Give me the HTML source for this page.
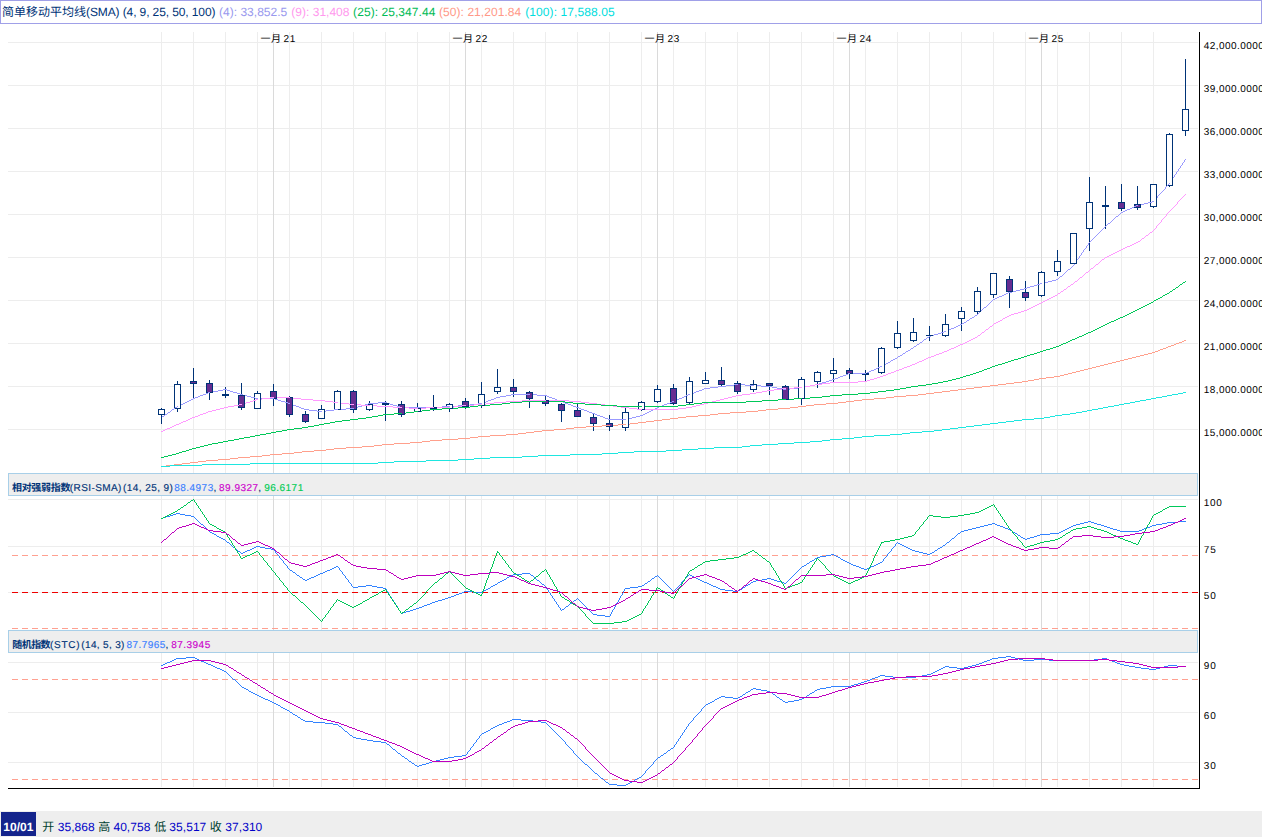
<!DOCTYPE html>
<html lang="zh-CN"><head><meta charset="utf-8"><title>SMA / RSI / STC</title>
<style>html,body{margin:0;padding:0;background:#fff;}body{width:1262px;height:837px;position:relative;overflow:hidden;}</style></head>
<body>
<svg width="1262" height="837" viewBox="0 0 1262 837" style="position:absolute;left:0;top:0">
<g shape-rendering="crispEdges" fill="none" stroke-width="1">
<path d="M161.5 32V787M193.5 32V787M225.5 32V787M257.5 32V787M289.5 32V787M321.5 32V787M353.5 32V787M385.5 32V787M417.5 32V787M449.5 32V787M481.5 32V787M513.5 32V787M545.5 32V787M577.5 32V787M609.5 32V787M641.5 32V787M673.5 32V787M705.5 32V787M737.5 32V787M769.5 32V787M801.5 32V787M833.5 32V787M865.5 32V787M897.5 32V787M929.5 32V787M961.5 32V787M993.5 32V787M1025.5 32V787M1057.5 32V787M1089.5 32V787M1121.5 32V787M1153.5 32V787" stroke="#ededed"/>
<path d="M8 42.5H1198M8 85.5H1198M8 128.5H1198M8 171.5H1198M8 214.5H1198M8 257.5H1198M8 300.5H1198M8 343.5H1198M8 386.5H1198M8 429.5H1198M8 499.5H1198M8 546.5H1198M8 592.5H1198M8 662.5H1198M8 712.5H1198M8 762.5H1198" stroke="#ededed"/>
<path d="M273.5 32V787M465.5 32V787M657.5 32V787M849.5 32V787M1041.5 32V787" stroke="#dadada"/>
</g>
<g shape-rendering="crispEdges" fill="none" stroke-linecap="butt" stroke-width="1">
<path d="M1185.5 59V136" stroke="#003377" stroke-width="1"/><rect x="1182.5" y="109.5" width="6" height="21" fill="#ffffff" stroke="#003377" stroke-width="1"/>
<path d="M1183.5 162v1M1182.5 163v2M1184.5 160v2M1174.5 175v2M1181.5 165v1M1178.5 169v2M1180.5 166v2M1185.5 159v1M1170.5 181v2M1172.5 178v2M1171.5 180v1M1176.5 172v2M1169.5 183v1M1173.5 177v1M1175.5 174v1M1177.5 171v1M1179.5 168v1" stroke="#9999ff"/>
<path d="M1170.5 210v1M1176.5 204v1M1179.5 200v1M1169.5 211v1M1177.5 202v2M1172.5 208v1M1180.5 199v1M1175.5 205v1M1171.5 209v1M1181.5 198v1M1183.5 196v1M1178.5 201v1M1184.5 195v1M1174.5 206v1M1182.5 197v1M1173.5 207v1M1185.5 194v1" stroke="#ff99ff"/>
<path d="M1176 287.5h2M1173 289.5h2M1183 282.5h2M1180 284.5h2M1170 291.5h2M1172.5 290v1M1169.5 292v1M1182.5 283v1M1178.5 286v1M1179.5 285v1M1175.5 288v1M1185.5 281v1" stroke="#00c858"/>
<path d="M1179 342.5h3M1171 345.5h3M1169 346.5h2M1176 343.5h3M1184 340.5h2M1174 344.5h2M1182 341.5h2" stroke="#ffa08c"/>
<path d="M1178 393.5h5M1183 392.5h3M1172 394.5h6M1169 395.5h3" stroke="#1ee6e0"/>
<path d="M1169.5 133V187" stroke="#003377" stroke-width="1"/><rect x="1166.5" y="134.5" width="6" height="51" fill="#ffffff" stroke="#003377" stroke-width="1"/>
<path d="M1163.5 190v1M1153.5 201v1M1162.5 191v1M1165.5 187v2M1161.5 192v1M1157.5 196v2M1159.5 194v1M1160.5 193v1M1156.5 198v1M1158.5 195v1M1168.5 184v1M1169.5 183v1M1154.5 200v1M1155.5 199v1M1164.5 189v1M1166.5 186v1M1167.5 185v1" stroke="#9999ff"/>
<path d="M1159.5 223v1M1162.5 219v1M1156.5 226v2M1158.5 224v1M1161.5 220v2M1154.5 229v1M1155.5 228v1M1157.5 225v1M1166.5 214v2M1168.5 212v1M1169.5 211v1M1153.5 230v1M1164.5 217v1M1165.5 216v1M1167.5 213v1M1163.5 218v1M1160.5 222v1" stroke="#ff99ff"/>
<path d="M1154 300.5h2M1167 293.5h2M1165 294.5h2M1156 299.5h2M1163 295.5h2M1158 298.5h2M1160 297.5h2M1162.5 296v1M1169.5 292v1M1153.5 301v1" stroke="#00c858"/>
<path d="M1155 351.5h3M1163 348.5h3M1168 346.5h2M1166 347.5h2M1158 350.5h2M1153 352.5h2M1160 349.5h3" stroke="#ffa08c"/>
<path d="M1162 396.5h5M1153 398.5h3M1167 395.5h3M1156 397.5h6" stroke="#1ee6e0"/>
<path d="M1153.5 184V208" stroke="#003377" stroke-width="1"/><rect x="1150.5" y="184.5" width="6" height="22" fill="#ffffff" stroke="#003377" stroke-width="1"/>
<path d="M1144 203.5h4M1148 202.5h4M1152 201.5h2M1137 205.5h3M1140 204.5h4" stroke="#9999ff"/>
<path d="M1150 232.5h2M1142 238.5h2M1138 241.5h2M1146 235.5h2M1145.5 236v1M1137.5 242v1M1148.5 234v1M1144.5 237v1M1153.5 230v1M1152.5 231v1M1140.5 240v1M1149.5 233v1M1141.5 239v1" stroke="#ff99ff"/>
<path d="M1149 303.5h2M1139 308.5h2M1145 305.5h2M1137 309.5h2M1147 304.5h2M1151 302.5h2M1141 307.5h2M1143 306.5h2M1153.5 301v1" stroke="#00c858"/>
<path d="M1144 354.5h4M1148 353.5h4M1137 356.5h3M1140 355.5h4M1152 352.5h2" stroke="#ffa08c"/>
<path d="M1146 399.5h5M1151 398.5h3M1140 400.5h6M1137 401.5h3" stroke="#1ee6e0"/>
<path d="M1137.5 186V210" stroke="#003377" stroke-width="1"/><rect x="1134.5" y="204.5" width="6" height="3" fill="#662d91" stroke="#003377" stroke-width="1"/>
<path d="M1127 209.5h3M1134 206.5h2M1123 211.5h2M1121 212.5h2M1132 207.5h2M1136 205.5h2M1130 208.5h2M1125 210.5h2" stroke="#9999ff"/>
<path d="M1132 244.5h2M1134 243.5h2M1123 248.5h2M1130 245.5h2M1136 242.5h2M1127 246.5h3M1125 247.5h2M1121 249.5h2" stroke="#ff99ff"/>
<path d="M1131 312.5h2M1125 315.5h2M1121 317.5h2M1127 314.5h2M1129 313.5h2M1133 311.5h2M1123 316.5h2M1135 310.5h2M1137.5 309v1" stroke="#00c858"/>
<path d="M1128 358.5h4M1121 360.5h3M1132 357.5h4M1124 359.5h4M1136 356.5h2" stroke="#ffa08c"/>
<path d="M1130 402.5h5M1124 403.5h6M1135 401.5h3M1121 404.5h3" stroke="#1ee6e0"/>
<path d="M1121.5 184V211" stroke="#003377" stroke-width="1"/><rect x="1118.5" y="202.5" width="6" height="6" fill="#662d91" stroke="#003377" stroke-width="1"/>
<path d="M1116 216.5h2M1108 223.5h2M1110.5 222v1M1106.5 225v1M1112.5 220v1M1120.5 213v1M1113.5 219v1M1105.5 226v1M1118.5 215v1M1111.5 221v1M1114.5 218v1M1115.5 217v1M1121.5 212v1M1107.5 224v1M1119.5 214v1" stroke="#9999ff"/>
<path d="M1111 254.5h2M1117 251.5h2M1115 252.5h2M1105 257.5h2M1113 253.5h2M1107 256.5h2M1119 250.5h2M1109 255.5h2M1121.5 249v1" stroke="#ff99ff"/>
<path d="M1109 322.5h2M1116 319.5h2M1105 324.5h2M1111 321.5h3M1114 320.5h2M1118 318.5h2M1120 317.5h2M1107 323.5h2" stroke="#00c858"/>
<path d="M1116 361.5h4M1105 364.5h3M1108 363.5h4M1120 360.5h2M1112 362.5h4" stroke="#ffa08c"/>
<path d="M1108 406.5h6M1114 405.5h5M1105 407.5h3M1119 404.5h3" stroke="#1ee6e0"/>
<path d="M1105.5 186V229" stroke="#003377" stroke-width="1"/><rect x="1102" y="205" width="7" height="2" fill="#003377" stroke="none"/>
<path d="M1095.5 236v1M1096.5 235v1M1102.5 229v1M1099.5 232v1M1105.5 226v1M1094.5 237v1M1090.5 241v1M1097.5 234v1M1093.5 238v1M1098.5 233v1M1091.5 240v1M1101.5 230v1M1104.5 227v1M1100.5 231v1M1089.5 242v1M1092.5 239v1M1103.5 228v1" stroke="#9999ff"/>
<path d="M1096 264.5h2M1102 259.5h2M1091 268.5h2M1089.5 270v1M1095.5 265v1M1098.5 263v1M1099.5 262v1M1104.5 258v1M1093.5 267v1M1094.5 266v1M1100.5 261v1M1101.5 260v1M1090.5 269v1M1105.5 257v1" stroke="#ff99ff"/>
<path d="M1103 325.5h2M1095 329.5h2M1091 331.5h2M1097 328.5h2M1093 330.5h2M1099 327.5h2M1089 332.5h2M1101 326.5h2M1105.5 324v1" stroke="#00c858"/>
<path d="M1104 364.5h2M1092 367.5h4M1096 366.5h4M1100 365.5h4M1089 368.5h3" stroke="#ffa08c"/>
<path d="M1092 409.5h6M1098 408.5h5M1103 407.5h3M1089 410.5h3" stroke="#1ee6e0"/>
<path d="M1089.5 177V251" stroke="#003377" stroke-width="1"/><rect x="1086.5" y="202.5" width="6" height="26" fill="#ffffff" stroke="#003377" stroke-width="1"/>
<path d="M1074.5 263v2M1076.5 260v2M1079.5 256v2M1081.5 253v2M1083.5 250v2M1086.5 246v2M1088.5 243v2M1078.5 258v1M1073.5 265v1M1075.5 262v1M1080.5 255v1M1085.5 248v1M1087.5 245v1M1077.5 259v1M1082.5 252v1M1084.5 249v1M1089.5 242v1" stroke="#9999ff"/>
<path d="M1075 281.5h2M1080 277.5h2M1086 272.5h2M1089.5 270v1M1073.5 283v1M1082.5 276v1M1088.5 271v1M1085.5 273v1M1078.5 279v1M1079.5 278v1M1077.5 280v1M1074.5 282v1M1083.5 275v1M1084.5 274v1" stroke="#ff99ff"/>
<path d="M1073 339.5h2M1077 337.5h2M1075 338.5h2M1084 334.5h2M1082 335.5h2M1088 332.5h2M1086 333.5h2M1079 336.5h3" stroke="#00c858"/>
<path d="M1076 371.5h4M1080 370.5h4M1073 372.5h3M1084 369.5h4M1088 368.5h2" stroke="#ffa08c"/>
<path d="M1076 412.5h6M1082 411.5h5M1073 413.5h3M1087 410.5h3" stroke="#1ee6e0"/>
<path d="M1073.5 233V264" stroke="#003377" stroke-width="1"/><rect x="1070.5" y="233.5" width="6" height="30" fill="#ffffff" stroke="#003377" stroke-width="1"/>
<path d="M1060 276.5h2M1068 269.5h2M1063.5 274v1M1059.5 277v1M1066.5 271v1M1072.5 266v1M1064.5 273v1M1065.5 272v1M1071.5 267v1M1057.5 279v1M1067.5 270v1M1058.5 278v1M1073.5 265v1M1070.5 268v1M1062.5 275v1" stroke="#9999ff"/>
<path d="M1058 293.5h2M1064 289.5h2M1068 286.5h2M1061 291.5h2M1071 284.5h2M1073.5 283v1M1067.5 287v1M1060.5 292v1M1057.5 294v1M1070.5 285v1M1066.5 288v1M1063.5 290v1" stroke="#ff99ff"/>
<path d="M1059 345.5h2M1066 342.5h2M1068 341.5h2M1063 343.5h3M1057 346.5h2M1061 344.5h2M1070 340.5h2M1072 339.5h2" stroke="#00c858"/>
<path d="M1064 374.5h4M1068 373.5h4M1057 376.5h3M1060 375.5h4M1072 372.5h2" stroke="#ffa08c"/>
<path d="M1057 415.5h5M1062 414.5h8M1070 413.5h4" stroke="#1ee6e0"/>
<path d="M1057.5 250V276" stroke="#003377" stroke-width="1"/><rect x="1054.5" y="261.5" width="6" height="10" fill="#ffffff" stroke="#003377" stroke-width="1"/>
<path d="M1048 281.5h4M1052 280.5h4M1041 283.5h3M1044 282.5h4M1056 279.5h2" stroke="#9999ff"/>
<path d="M1047 299.5h2M1053 296.5h2M1045 300.5h2M1041 302.5h2M1055 295.5h2M1043 301.5h2M1049 298.5h2M1051 297.5h2M1057.5 294v1" stroke="#ff99ff"/>
<path d="M1041 351.5h2M1050 348.5h3M1043 350.5h3M1056 346.5h2M1053 347.5h3M1046 349.5h4" stroke="#00c858"/>
<path d="M1046 377.5h8M1041 378.5h5M1054 376.5h4" stroke="#ffa08c"/>
<path d="M1055 415.5h3M1050 416.5h5M1041 418.5h3M1044 417.5h6" stroke="#1ee6e0"/>
<path d="M1041.5 271V297" stroke="#003377" stroke-width="1"/><rect x="1038.5" y="272.5" width="6" height="23" fill="#ffffff" stroke="#003377" stroke-width="1"/>
<path d="M1037 284.5h3M1040 283.5h2M1027 287.5h3M1030 286.5h4M1034 285.5h3M1025 288.5h2" stroke="#9999ff"/>
<path d="M1033 306.5h2M1029 308.5h2M1031 307.5h2M1027 309.5h2M1035 305.5h2M1039 303.5h2M1037 304.5h2M1025 310.5h2M1041.5 302v1" stroke="#ff99ff"/>
<path d="M1030 354.5h4M1034 353.5h3M1040 351.5h2M1025 356.5h2M1037 352.5h3M1027 355.5h3" stroke="#00c858"/>
<path d="M1028 380.5h6M1039 378.5h3M1034 379.5h5M1025 381.5h3" stroke="#ffa08c"/>
<path d="M1025 419.5h9M1034 418.5h8" stroke="#1ee6e0"/>
<path d="M1025.5 281V301" stroke="#003377" stroke-width="1"/><rect x="1022.5" y="292.5" width="6" height="5" fill="#662d91" stroke="#003377" stroke-width="1"/>
<path d="M1024 288.5h2M1012 291.5h4M1009 292.5h3M1016 290.5h4M1020 289.5h4" stroke="#9999ff"/>
<path d="M1014 313.5h4M1024 310.5h2M1018 312.5h3M1021 311.5h3M1011 314.5h3M1009 315.5h2" stroke="#ff99ff"/>
<path d="M1009 361.5h2M1021 357.5h3M1011 360.5h3M1024 356.5h2M1014 359.5h4M1018 358.5h3" stroke="#00c858"/>
<path d="M1009 383.5h5M1014 382.5h8M1022 381.5h4" stroke="#ffa08c"/>
<path d="M1009 421.5h5M1022 419.5h4M1014 420.5h8" stroke="#1ee6e0"/>
<path d="M1009.5 276V308" stroke="#003377" stroke-width="1"/><rect x="1006.5" y="279.5" width="6" height="12" fill="#662d91" stroke="#003377" stroke-width="1"/>
<path d="M993 299.5h2M999 296.5h3M1002 295.5h2M1004 294.5h2M1008 292.5h2M1006 293.5h2M997 297.5h2M995 298.5h2" stroke="#9999ff"/>
<path d="M996 322.5h2M1003 318.5h2M1007 316.5h2M994 323.5h2M998 321.5h2M1005 317.5h2M1000 320.5h2M1002.5 319v1M993.5 324v1M1009.5 315v1" stroke="#ff99ff"/>
<path d="M1008 361.5h2M993 366.5h2M998 364.5h4M1002 363.5h3M1005 362.5h3M995 365.5h3" stroke="#00c858"/>
<path d="M998 384.5h8M1006 383.5h4M993 385.5h5" stroke="#ffa08c"/>
<path d="M998 422.5h8M1006 421.5h4M993 423.5h5" stroke="#1ee6e0"/>
<path d="M993.5 273V298" stroke="#003377" stroke-width="1"/><rect x="990.5" y="273.5" width="6" height="21" fill="#ffffff" stroke="#003377" stroke-width="1"/>
<path d="M984 307.5h2M990.5 302v1M986.5 306v1M991.5 301v1M993.5 299v1M980.5 311v1M987.5 305v1M979.5 312v1M977.5 314v1M982.5 309v1M983.5 308v1M988.5 304v1M989.5 303v1M981.5 310v1M992.5 300v1M978.5 313v1" stroke="#9999ff"/>
<path d="M978 335.5h2M990 326.5h2M982 332.5h2M986 329.5h2M992.5 325v1M988.5 328v1M980.5 334v1M989.5 327v1M985.5 330v1M984.5 331v1M993.5 324v1M981.5 333v1M977.5 336v1" stroke="#ff99ff"/>
<path d="M979 371.5h3M982 370.5h2M987 368.5h3M984 369.5h3M992 366.5h2M990 367.5h2M977 372.5h2" stroke="#00c858"/>
<path d="M977 387.5h5M982 386.5h8M990 385.5h4" stroke="#ffa08c"/>
<path d="M982 424.5h8M977 425.5h5M990 423.5h4" stroke="#1ee6e0"/>
<path d="M977.5 287V315" stroke="#003377" stroke-width="1"/><rect x="974.5" y="291.5" width="6" height="20" fill="#ffffff" stroke="#003377" stroke-width="1"/>
<path d="M964 322.5h2M975 315.5h2M970 318.5h2M972 317.5h2M962 323.5h2M967 320.5h2M969.5 319v1M961.5 324v1M974.5 316v1M966.5 321v1M977.5 314v1" stroke="#9999ff"/>
<path d="M961 344.5h2M967 341.5h2M971 339.5h2M975 337.5h2M969 340.5h2M963 343.5h2M973 338.5h2M965 342.5h2M977.5 336v1" stroke="#ff99ff"/>
<path d="M961 377.5h2M970 374.5h3M963 376.5h3M973 373.5h3M966 375.5h4M976 372.5h2" stroke="#00c858"/>
<path d="M961 389.5h5M974 387.5h4M966 388.5h8" stroke="#ffa08c"/>
<path d="M974 425.5h4M966 426.5h8M961 427.5h5" stroke="#1ee6e0"/>
<path d="M961.5 307V331" stroke="#003377" stroke-width="1"/><rect x="958.5" y="311.5" width="6" height="7" fill="#ffffff" stroke="#003377" stroke-width="1"/>
<path d="M949 329.5h2M956 326.5h2M960 324.5h2M958 325.5h2M951 328.5h3M945 331.5h2M947 330.5h2M954 327.5h2" stroke="#9999ff"/>
<path d="M960 344.5h2M945 351.5h2M947 350.5h2M951 348.5h3M954 347.5h2M956 346.5h2M958 345.5h2M949 349.5h2" stroke="#ff99ff"/>
<path d="M948 380.5h4M960 377.5h2M952 379.5h4M956 378.5h4M945 381.5h3" stroke="#00c858"/>
<path d="M950 390.5h8M958 389.5h4M945 391.5h5" stroke="#ffa08c"/>
<path d="M945 429.5h5M950 428.5h8M958 427.5h4" stroke="#1ee6e0"/>
<path d="M945.5 314V337" stroke="#003377" stroke-width="1"/><rect x="942.5" y="324.5" width="6" height="11" fill="#ffffff" stroke="#003377" stroke-width="1"/>
<path d="M931 335.5h3M941 332.5h3M934 334.5h4M938 333.5h3M944 331.5h2M929 336.5h2" stroke="#9999ff"/>
<path d="M936 354.5h3M939 353.5h3M944 351.5h2M929 357.5h2M934 355.5h2M931 356.5h3M942 352.5h2" stroke="#ff99ff"/>
<path d="M932 383.5h6M929 384.5h3M938 382.5h5M943 381.5h3" stroke="#00c858"/>
<path d="M934 392.5h8M929 393.5h5M942 391.5h4" stroke="#ffa08c"/>
<path d="M929 431.5h5M942 429.5h4M934 430.5h8" stroke="#1ee6e0"/>
<path d="M929.5 326V341" stroke="#003377" stroke-width="1"/><rect x="926" y="335" width="7" height="1" fill="#003377" stroke="none"/>
<path d="M917 344.5h2M924 339.5h2M920 342.5h2M914 346.5h2M927 337.5h2M926.5 338v1M923.5 340v1M922.5 341v1M919.5 343v1M913.5 347v1M916.5 345v1M929.5 336v1" stroke="#9999ff"/>
<path d="M924 359.5h2M919 361.5h3M926 358.5h2M913 364.5h2M928 357.5h2M915 363.5h2M917 362.5h2M922 360.5h2" stroke="#ff99ff"/>
<path d="M913 386.5h5M926 384.5h4M918 385.5h8" stroke="#00c858"/>
<path d="M926 393.5h4M913 395.5h5M918 394.5h8" stroke="#ffa08c"/>
<path d="M913 432.5h9M922 431.5h8" stroke="#1ee6e0"/>
<path d="M913.5 318V342" stroke="#003377" stroke-width="1"/><rect x="910.5" y="332.5" width="6" height="8" fill="#ffffff" stroke="#003377" stroke-width="1"/>
<path d="M911 348.5h2M906 351.5h2M908 350.5h2M903 353.5h2M898 356.5h2M900 355.5h2M902.5 354v1M913.5 347v1M910.5 349v1M905.5 352v1M897.5 357v1" stroke="#9999ff"/>
<path d="M897 370.5h2M904 367.5h3M912 364.5h2M907 366.5h3M910 365.5h2M899 369.5h3M902 368.5h2" stroke="#ff99ff"/>
<path d="M906 387.5h5M897 389.5h3M900 388.5h6M911 386.5h3" stroke="#00c858"/>
<path d="M897 396.5h9M906 395.5h8" stroke="#ffa08c"/>
<path d="M897 434.5h5M902 433.5h8M910 432.5h4" stroke="#1ee6e0"/>
<path d="M897.5 321V349" stroke="#003377" stroke-width="1"/><rect x="894.5" y="333.5" width="6" height="14" fill="#ffffff" stroke="#003377" stroke-width="1"/>
<path d="M895 358.5h2M884 364.5h2M882 365.5h2M891 360.5h2M886 363.5h2M893 359.5h2M888 362.5h2M881.5 366v1M890.5 361v1M897.5 357v1" stroke="#9999ff"/>
<path d="M888 373.5h3M896 370.5h2M881 376.5h2M886 374.5h2M883 375.5h3M891 372.5h3M894 371.5h2" stroke="#ff99ff"/>
<path d="M881 391.5h5M886 390.5h8M894 389.5h4" stroke="#00c858"/>
<path d="M886 397.5h8M894 396.5h4M881 398.5h5" stroke="#ffa08c"/>
<path d="M881 435.5h9M890 434.5h8" stroke="#1ee6e0"/>
<path d="M881.5 347V374" stroke="#003377" stroke-width="1"/><rect x="878.5" y="348.5" width="6" height="24" fill="#ffffff" stroke="#003377" stroke-width="1"/>
<path d="M869 371.5h2M871 370.5h3M876 368.5h2M878 367.5h2M865 373.5h2M880 366.5h2M867 372.5h2M874 369.5h2" stroke="#9999ff"/>
<path d="M877 377.5h3M880 376.5h2M867 380.5h3M870 379.5h4M865 381.5h2M874 378.5h3" stroke="#ff99ff"/>
<path d="M865 393.5h5M870 392.5h8M878 391.5h4" stroke="#00c858"/>
<path d="M865 399.5h9M874 398.5h8" stroke="#ffa08c"/>
<path d="M874 435.5h8M865 436.5h9" stroke="#1ee6e0"/>
<path d="M865.5 370V381" stroke="#003377" stroke-width="1"/><rect x="862" y="373" width="7" height="2" fill="#003377" stroke="none"/>
<path d="M849 373.5h17" stroke="#9999ff"/>
<path d="M858 381.5h8M849 382.5h9" stroke="#ff99ff"/>
<path d="M858 393.5h8M849 394.5h9" stroke="#00c858"/>
<path d="M862 399.5h4M854 400.5h8M849 401.5h5" stroke="#ffa08c"/>
<path d="M849 438.5h5M854 437.5h8M862 436.5h4" stroke="#1ee6e0"/>
<path d="M849.5 368V379" stroke="#003377" stroke-width="1"/><rect x="846.5" y="370.5" width="6" height="3" fill="#662d91" stroke="#003377" stroke-width="1"/>
<path d="M840 376.5h3M848 373.5h2M833 379.5h2M846 374.5h2M843 375.5h3M835 378.5h3M838 377.5h2" stroke="#9999ff"/>
<path d="M833 382.5h17" stroke="#ff99ff"/>
<path d="M842 394.5h8M833 395.5h9" stroke="#00c858"/>
<path d="M833 403.5h5M838 402.5h8M846 401.5h4" stroke="#ffa08c"/>
<path d="M833 439.5h9M842 438.5h8" stroke="#1ee6e0"/>
<path d="M833.5 358V383" stroke="#003377" stroke-width="1"/><rect x="830.5" y="370.5" width="6" height="3" fill="#ffffff" stroke="#003377" stroke-width="1"/>
<path d="M819 383.5h3M829 380.5h3M832 379.5h2M822 382.5h4M826 381.5h3M817 384.5h2" stroke="#9999ff"/>
<path d="M817 384.5h5M822 383.5h8M830 382.5h4" stroke="#ff99ff"/>
<path d="M822 396.5h8M817 397.5h5M830 395.5h4" stroke="#00c858"/>
<path d="M826 403.5h8M817 404.5h9" stroke="#ffa08c"/>
<path d="M817 441.5h5M830 439.5h4M822 440.5h8" stroke="#1ee6e0"/>
<path d="M817.5 371V388" stroke="#003377" stroke-width="1"/><rect x="814.5" y="372.5" width="6" height="9" fill="#ffffff" stroke="#003377" stroke-width="1"/>
<path d="M804 386.5h6M815 384.5h3M801 387.5h3M810 385.5h5" stroke="#9999ff"/>
<path d="M804 386.5h6M815 384.5h3M801 387.5h3M810 385.5h5" stroke="#ff99ff"/>
<path d="M810 397.5h8M801 398.5h9" stroke="#00c858"/>
<path d="M801 406.5h5M806 405.5h8M814 404.5h4" stroke="#ffa08c"/>
<path d="M801 442.5h9M810 441.5h8" stroke="#1ee6e0"/>
<path d="M801.5 377V405" stroke="#003377" stroke-width="1"/><rect x="798.5" y="379.5" width="6" height="19" fill="#ffffff" stroke="#003377" stroke-width="1"/>
<path d="M785 389.5h5M798 387.5h4M790 388.5h8" stroke="#9999ff"/>
<path d="M794 387.5h8M785 388.5h9" stroke="#ff99ff"/>
<path d="M785 399.5h9M794 398.5h8" stroke="#00c858"/>
<path d="M790 407.5h8M798 406.5h4M785 408.5h5" stroke="#ffa08c"/>
<path d="M794 442.5h8M785 443.5h9" stroke="#1ee6e0"/>
<path d="M785.5 385V400" stroke="#003377" stroke-width="1"/><rect x="782.5" y="386.5" width="6" height="13" fill="#662d91" stroke="#003377" stroke-width="1"/>
<path d="M772 387.5h5M783 389.5h3M769 386.5h3M777 388.5h6" stroke="#9999ff"/>
<path d="M782 388.5h4M774 389.5h8M769 390.5h5" stroke="#ff99ff"/>
<path d="M778 399.5h8M769 400.5h9" stroke="#00c858"/>
<path d="M778 408.5h8M769 409.5h9" stroke="#ffa08c"/>
<path d="M769 444.5h9M778 443.5h8" stroke="#1ee6e0"/>
<path d="M769.5 383V395" stroke="#003377" stroke-width="1"/><rect x="766.5" y="383.5" width="6" height="2" fill="#662d91" stroke="#003377" stroke-width="1"/>
<path d="M761 386.5h9M753 385.5h8" stroke="#9999ff"/>
<path d="M753 393.5h3M767 390.5h3M756 392.5h6M762 391.5h5" stroke="#ff99ff"/>
<path d="M762 400.5h8M753 401.5h9" stroke="#00c858"/>
<path d="M766 409.5h4M753 411.5h5M758 410.5h8" stroke="#ffa08c"/>
<path d="M753 445.5h9M762 444.5h8" stroke="#1ee6e0"/>
<path d="M753.5 380V392" stroke="#003377" stroke-width="1"/><rect x="750.5" y="384.5" width="6" height="5" fill="#ffffff" stroke="#003377" stroke-width="1"/>
<path d="M737 384.5h8M745 385.5h9" stroke="#9999ff"/>
<path d="M750 393.5h4M742 394.5h8M737 395.5h5" stroke="#ff99ff"/>
<path d="M737 402.5h9M746 401.5h8" stroke="#00c858"/>
<path d="M737 412.5h9M746 411.5h8" stroke="#ffa08c"/>
<path d="M737 447.5h5M750 445.5h4M742 446.5h8" stroke="#1ee6e0"/>
<path d="M737.5 381V394" stroke="#003377" stroke-width="1"/><rect x="734.5" y="383.5" width="6" height="8" fill="#662d91" stroke="#003377" stroke-width="1"/>
<path d="M721 386.5h5M726 385.5h8M734 384.5h4" stroke="#9999ff"/>
<path d="M732 396.5h4M721 399.5h3M728 397.5h4M724 398.5h4M736 395.5h2" stroke="#ff99ff"/>
<path d="M721 402.5h17" stroke="#00c858"/>
<path d="M721 413.5h9M730 412.5h8" stroke="#ffa08c"/>
<path d="M721 447.5h17" stroke="#1ee6e0"/>
<path d="M721.5 367V387" stroke="#003377" stroke-width="1"/><rect x="718.5" y="380.5" width="6" height="4" fill="#662d91" stroke="#003377" stroke-width="1"/>
<path d="M705 388.5h5M710 387.5h8M718 386.5h4" stroke="#9999ff"/>
<path d="M716 400.5h4M705 403.5h3M720 399.5h2M708 402.5h4M712 401.5h4" stroke="#ff99ff"/>
<path d="M705 402.5h17" stroke="#00c858"/>
<path d="M705 415.5h5M710 414.5h8M718 413.5h4" stroke="#ffa08c"/>
<path d="M705 448.5h9M714 447.5h8" stroke="#1ee6e0"/>
<path d="M705.5 372V384" stroke="#003377" stroke-width="1"/><rect x="702.5" y="380.5" width="6" height="3" fill="#ffffff" stroke="#003377" stroke-width="1"/>
<path d="M691 393.5h3M699 390.5h3M702 389.5h2M696 391.5h3M704 388.5h2M689 394.5h2M694 392.5h2" stroke="#9999ff"/>
<path d="M696 405.5h4M689 407.5h3M692 406.5h4M700 404.5h4M704 403.5h2" stroke="#ff99ff"/>
<path d="M694 403.5h8M702 402.5h4M689 404.5h5" stroke="#00c858"/>
<path d="M689 416.5h9M698 415.5h8" stroke="#ffa08c"/>
<path d="M698 448.5h8M689 449.5h9" stroke="#1ee6e0"/>
<path d="M689.5 377V404" stroke="#003377" stroke-width="1"/><rect x="686.5" y="381.5" width="6" height="21" fill="#ffffff" stroke="#003377" stroke-width="1"/>
<path d="M684 396.5h2M682 397.5h2M688 394.5h2M673 401.5h2M677 399.5h2M679 398.5h3M686 395.5h2M675 400.5h2" stroke="#9999ff"/>
<path d="M673 409.5h5M678 408.5h8M686 407.5h4" stroke="#ff99ff"/>
<path d="M673 406.5h5M678 405.5h8M686 404.5h4" stroke="#00c858"/>
<path d="M686 416.5h4M673 418.5h5M678 417.5h8" stroke="#ffa08c"/>
<path d="M673 450.5h9M682 449.5h8" stroke="#1ee6e0"/>
<path d="M673.5 384V405" stroke="#003377" stroke-width="1"/><rect x="670.5" y="388.5" width="6" height="15" fill="#662d91" stroke="#003377" stroke-width="1"/>
<path d="M657 407.5h2M659 406.5h3M667 403.5h3M662 405.5h2M670 402.5h2M672 401.5h2M664 404.5h3" stroke="#9999ff"/>
<path d="M657 409.5h17" stroke="#ff99ff"/>
<path d="M657 406.5h17" stroke="#00c858"/>
<path d="M662 419.5h8M670 418.5h4M657 420.5h5" stroke="#ffa08c"/>
<path d="M657 451.5h9M666 450.5h8" stroke="#1ee6e0"/>
<path d="M657.5 385V403" stroke="#003377" stroke-width="1"/><rect x="654.5" y="389.5" width="6" height="12" fill="#ffffff" stroke="#003377" stroke-width="1"/>
<path d="M653 409.5h2M647 412.5h2M641 415.5h2M655 408.5h2M649 411.5h2M643 414.5h2M651 410.5h2M645 413.5h2M657.5 407v1" stroke="#9999ff"/>
<path d="M641 409.5h17" stroke="#ff99ff"/>
<path d="M641 406.5h17" stroke="#00c858"/>
<path d="M641 422.5h5M646 421.5h8M654 420.5h4" stroke="#ffa08c"/>
<path d="M641 451.5h17" stroke="#1ee6e0"/>
<path d="M641.5 401V411" stroke="#003377" stroke-width="1"/><rect x="638.5" y="402.5" width="6" height="7" fill="#ffffff" stroke="#003377" stroke-width="1"/>
<path d="M628 418.5h4M636 416.5h4M640 415.5h2M632 417.5h4M625 419.5h3" stroke="#9999ff"/>
<path d="M637 409.5h5M629 408.5h8M625 407.5h4" stroke="#ff99ff"/>
<path d="M625 406.5h17" stroke="#00c858"/>
<path d="M630 423.5h8M625 424.5h5M638 422.5h4" stroke="#ffa08c"/>
<path d="M634 451.5h8M625 452.5h9" stroke="#1ee6e0"/>
<path d="M625.5 408V431" stroke="#003377" stroke-width="1"/><rect x="622.5" y="412.5" width="6" height="15" fill="#ffffff" stroke="#003377" stroke-width="1"/>
<path d="M609 419.5h17" stroke="#9999ff"/>
<path d="M613 406.5h8M609 405.5h4M621 407.5h5" stroke="#ff99ff"/>
<path d="M617 406.5h9M609 405.5h8" stroke="#00c858"/>
<path d="M609 425.5h9M618 424.5h8" stroke="#ffa08c"/>
<path d="M618 452.5h8M609 453.5h9" stroke="#1ee6e0"/>
<path d="M609.5 415V431" stroke="#003377" stroke-width="1"/><rect x="606.5" y="423.5" width="6" height="3" fill="#662d91" stroke="#003377" stroke-width="1"/>
<path d="M605 418.5h3M597 415.5h3M608 419.5h2M595 414.5h2M603 417.5h2M600 416.5h3M593 413.5h2" stroke="#9999ff"/>
<path d="M593 403.5h4M605 405.5h5M597 404.5h8" stroke="#ff99ff"/>
<path d="M601 405.5h9M593 404.5h8" stroke="#00c858"/>
<path d="M602 425.5h8M593 426.5h9" stroke="#ffa08c"/>
<path d="M593 454.5h9M602 453.5h8" stroke="#1ee6e0"/>
<path d="M593.5 414V431" stroke="#003377" stroke-width="1"/><rect x="590.5" y="417.5" width="6" height="6" fill="#662d91" stroke="#003377" stroke-width="1"/>
<path d="M581 409.5h3M584 410.5h3M579 408.5h2M592 413.5h2M589 412.5h3M587 411.5h2M577 407.5h2" stroke="#9999ff"/>
<path d="M581 402.5h8M589 403.5h5M577 401.5h4" stroke="#ff99ff"/>
<path d="M577 403.5h8M585 404.5h9" stroke="#00c858"/>
<path d="M586 426.5h8M577 427.5h9" stroke="#ffa08c"/>
<path d="M577 454.5h17" stroke="#1ee6e0"/>
<path d="M577.5 404V417" stroke="#003377" stroke-width="1"/><rect x="574.5" y="410.5" width="6" height="6" fill="#662d91" stroke="#003377" stroke-width="1"/>
<path d="M563 402.5h2M565 403.5h3M573 406.5h3M571 405.5h2M568 404.5h3M576 407.5h2M561 401.5h2" stroke="#9999ff"/>
<path d="M569 401.5h9M561 400.5h8" stroke="#ff99ff"/>
<path d="M565 402.5h8M573 403.5h5M561 401.5h4" stroke="#00c858"/>
<path d="M561 429.5h5M566 428.5h8M574 427.5h4" stroke="#ffa08c"/>
<path d="M570 454.5h8M561 455.5h9" stroke="#1ee6e0"/>
<path d="M561.5 403V422" stroke="#003377" stroke-width="1"/><rect x="558.5" y="404.5" width="6" height="6" fill="#662d91" stroke="#003377" stroke-width="1"/>
<path d="M557 400.5h3M555 399.5h2M552 398.5h3M545 395.5h2M547 396.5h2M549 397.5h3M560 401.5h2" stroke="#9999ff"/>
<path d="M545 400.5h17" stroke="#ff99ff"/>
<path d="M545 401.5h17" stroke="#00c858"/>
<path d="M545 430.5h9M554 429.5h8" stroke="#ffa08c"/>
<path d="M545 455.5h17" stroke="#1ee6e0"/>
<path d="M545.5 395V406" stroke="#003377" stroke-width="1"/><rect x="542.5" y="400.5" width="6" height="3" fill="#662d91" stroke="#003377" stroke-width="1"/>
<path d="M529 394.5h8M537 395.5h9" stroke="#9999ff"/>
<path d="M529 400.5h17" stroke="#ff99ff"/>
<path d="M529 401.5h17" stroke="#00c858"/>
<path d="M534 431.5h8M529 432.5h5M542 430.5h4" stroke="#ffa08c"/>
<path d="M529 456.5h9M538 455.5h8" stroke="#1ee6e0"/>
<path d="M529.5 391V408" stroke="#003377" stroke-width="1"/><rect x="526.5" y="392.5" width="6" height="6" fill="#662d91" stroke="#003377" stroke-width="1"/>
<path d="M513 394.5h17" stroke="#9999ff"/>
<path d="M522 400.5h8M513 401.5h9" stroke="#ff99ff"/>
<path d="M522 401.5h8M513 402.5h9" stroke="#00c858"/>
<path d="M513 434.5h5M526 432.5h4M518 433.5h8" stroke="#ffa08c"/>
<path d="M513 457.5h9M522 456.5h8" stroke="#1ee6e0"/>
<path d="M513.5 379V397" stroke="#003377" stroke-width="1"/><rect x="510.5" y="387.5" width="6" height="4" fill="#662d91" stroke="#003377" stroke-width="1"/>
<path d="M500 396.5h6M497 397.5h3M506 395.5h5M511 394.5h3" stroke="#9999ff"/>
<path d="M497 402.5h9M506 401.5h8" stroke="#ff99ff"/>
<path d="M502 403.5h8M510 402.5h4M497 404.5h5" stroke="#00c858"/>
<path d="M506 434.5h8M497 435.5h9" stroke="#ffa08c"/>
<path d="M497 457.5h17" stroke="#1ee6e0"/>
<path d="M497.5 369V394" stroke="#003377" stroke-width="1"/><rect x="494.5" y="387.5" width="6" height="4" fill="#ffffff" stroke="#003377" stroke-width="1"/>
<path d="M483 402.5h3M488 400.5h3M491 399.5h3M481 403.5h2M496 397.5h2M486 401.5h2M494 398.5h2" stroke="#9999ff"/>
<path d="M481 404.5h5M486 403.5h8M494 402.5h4" stroke="#ff99ff"/>
<path d="M481 405.5h9M490 404.5h8" stroke="#00c858"/>
<path d="M490 435.5h8M481 436.5h9" stroke="#ffa08c"/>
<path d="M490 457.5h8M481 458.5h9" stroke="#1ee6e0"/>
<path d="M481.5 382V408" stroke="#003377" stroke-width="1"/><rect x="478.5" y="394.5" width="6" height="11" fill="#ffffff" stroke="#003377" stroke-width="1"/>
<path d="M470 404.5h8M465 405.5h5M478 403.5h4" stroke="#9999ff"/>
<path d="M474 404.5h8M465 405.5h9" stroke="#ff99ff"/>
<path d="M470 406.5h8M478 405.5h4M465 407.5h5" stroke="#00c858"/>
<path d="M465 438.5h5M470 437.5h8M478 436.5h4" stroke="#ffa08c"/>
<path d="M474 458.5h8M465 459.5h9" stroke="#1ee6e0"/>
<path d="M465.5 398V409" stroke="#003377" stroke-width="1"/><rect x="462.5" y="401.5" width="6" height="5" fill="#662d91" stroke="#003377" stroke-width="1"/>
<path d="M449 406.5h9M458 405.5h8" stroke="#9999ff"/>
<path d="M454 406.5h8M462 405.5h4M449 407.5h5" stroke="#ff99ff"/>
<path d="M449 408.5h9M458 407.5h8" stroke="#00c858"/>
<path d="M458 438.5h8M449 439.5h9" stroke="#ffa08c"/>
<path d="M449 460.5h9M458 459.5h8" stroke="#1ee6e0"/>
<path d="M449.5 403V412" stroke="#003377" stroke-width="1"/><rect x="446.5" y="404.5" width="6" height="4" fill="#ffffff" stroke="#003377" stroke-width="1"/>
<path d="M433 407.5h9M442 406.5h8" stroke="#9999ff"/>
<path d="M433 407.5h17" stroke="#ff99ff"/>
<path d="M433 409.5h9M442 408.5h8" stroke="#00c858"/>
<path d="M442 439.5h8M433 440.5h9" stroke="#ffa08c"/>
<path d="M433 460.5h17" stroke="#1ee6e0"/>
<path d="M433.5 395V411" stroke="#003377" stroke-width="1"/><rect x="430" y="407" width="7" height="2" fill="#003377" stroke="none"/>
<path d="M417 407.5h17" stroke="#9999ff"/>
<path d="M426 407.5h8M417 408.5h9" stroke="#ff99ff"/>
<path d="M430 409.5h4M422 410.5h8M417 411.5h5" stroke="#00c858"/>
<path d="M417 442.5h5M422 441.5h8M430 440.5h4" stroke="#ffa08c"/>
<path d="M417 461.5h9M426 460.5h8" stroke="#1ee6e0"/>
<path d="M417.5 403V412" stroke="#003377" stroke-width="1"/><rect x="414.5" y="408.5" width="6" height="3" fill="#ffffff" stroke="#003377" stroke-width="1"/>
<path d="M401 407.5h17" stroke="#9999ff"/>
<path d="M401 407.5h8M409 408.5h9" stroke="#ff99ff"/>
<path d="M414 411.5h4M406 412.5h8M401 413.5h5" stroke="#00c858"/>
<path d="M410 442.5h8M401 443.5h9" stroke="#ffa08c"/>
<path d="M401 461.5h17" stroke="#1ee6e0"/>
<path d="M401.5 401V417" stroke="#003377" stroke-width="1"/><rect x="398.5" y="404.5" width="6" height="10" fill="#662d91" stroke="#003377" stroke-width="1"/>
<path d="M397 406.5h3M393 405.5h4M387 403.5h3M385 402.5h2M390 404.5h3M400 407.5h2" stroke="#9999ff"/>
<path d="M385 406.5h8M393 407.5h9" stroke="#ff99ff"/>
<path d="M394 413.5h8M385 414.5h9" stroke="#00c858"/>
<path d="M385 444.5h9M394 443.5h8" stroke="#ffa08c"/>
<path d="M394 461.5h8M385 462.5h9" stroke="#1ee6e0"/>
<path d="M385.5 401V421" stroke="#003377" stroke-width="1"/><rect x="382.5" y="403.5" width="6" height="1" fill="#662d91" stroke="#003377" stroke-width="1"/>
<path d="M369 403.5h9M378 402.5h8" stroke="#9999ff"/>
<path d="M377 406.5h9M369 405.5h8" stroke="#ff99ff"/>
<path d="M372 416.5h6M378 415.5h5M369 417.5h3M383 414.5h3" stroke="#00c858"/>
<path d="M374 445.5h8M382 444.5h4M369 446.5h5" stroke="#ffa08c"/>
<path d="M369 463.5h9M378 462.5h8" stroke="#1ee6e0"/>
<path d="M369.5 401V411" stroke="#003377" stroke-width="1"/><rect x="366.5" y="404.5" width="6" height="5" fill="#ffffff" stroke="#003377" stroke-width="1"/>
<path d="M368 403.5h2M355 407.5h3M358 406.5h4M362 405.5h3M365 404.5h3M353 408.5h2" stroke="#9999ff"/>
<path d="M353 404.5h8M361 405.5h9" stroke="#ff99ff"/>
<path d="M353 419.5h5M358 418.5h8M366 417.5h4" stroke="#00c858"/>
<path d="M353 447.5h9M362 446.5h8" stroke="#ffa08c"/>
<path d="M353 463.5h17" stroke="#1ee6e0"/>
<path d="M353.5 390V413" stroke="#003377" stroke-width="1"/><rect x="350.5" y="391.5" width="6" height="18" fill="#662d91" stroke="#003377" stroke-width="1"/>
<path d="M337 409.5h9M346 408.5h8" stroke="#9999ff"/>
<path d="M341 403.5h8M337 402.5h4M349 404.5h5" stroke="#ff99ff"/>
<path d="M337 421.5h5M350 419.5h4M342 420.5h8" stroke="#00c858"/>
<path d="M337 448.5h9M346 447.5h8" stroke="#ffa08c"/>
<path d="M337 463.5h17" stroke="#1ee6e0"/>
<path d="M337.5 390V410" stroke="#003377" stroke-width="1"/><rect x="334.5" y="391.5" width="6" height="18" fill="#ffffff" stroke="#003377" stroke-width="1"/>
<path d="M326 410.5h8M334 409.5h4M321 411.5h5" stroke="#9999ff"/>
<path d="M333 402.5h5M321 400.5h4M325 401.5h8" stroke="#ff99ff"/>
<path d="M330 422.5h5M321 424.5h3M335 421.5h3M324 423.5h6" stroke="#00c858"/>
<path d="M334 448.5h4M321 450.5h5M326 449.5h8" stroke="#ffa08c"/>
<path d="M321 463.5h17" stroke="#1ee6e0"/>
<path d="M321.5 405V419" stroke="#003377" stroke-width="1"/><rect x="318.5" y="409.5" width="6" height="9" fill="#ffffff" stroke="#003377" stroke-width="1"/>
<path d="M305 409.5h4M309 410.5h8M317 411.5h5" stroke="#9999ff"/>
<path d="M305 399.5h8M313 400.5h9" stroke="#ff99ff"/>
<path d="M308 426.5h6M314 425.5h5M305 427.5h3M319 424.5h3" stroke="#00c858"/>
<path d="M305 451.5h9M314 450.5h8" stroke="#ffa08c"/>
<path d="M305 463.5h17" stroke="#1ee6e0"/>
<path d="M305.5 411V423" stroke="#003377" stroke-width="1"/><rect x="302.5" y="414.5" width="6" height="7" fill="#662d91" stroke="#003377" stroke-width="1"/>
<path d="M296 406.5h3M293 405.5h3M289 403.5h2M304 409.5h2M301 408.5h3M299 407.5h2M291 404.5h2" stroke="#9999ff"/>
<path d="M289 397.5h4M301 399.5h5M293 398.5h8" stroke="#ff99ff"/>
<path d="M294 428.5h8M289 429.5h5M302 427.5h4" stroke="#00c858"/>
<path d="M302 451.5h4M289 453.5h5M294 452.5h8" stroke="#ffa08c"/>
<path d="M289 463.5h17" stroke="#1ee6e0"/>
<path d="M289.5 396V417" stroke="#003377" stroke-width="1"/><rect x="286.5" y="397.5" width="6" height="17" fill="#662d91" stroke="#003377" stroke-width="1"/>
<path d="M278 400.5h3M285 402.5h3M288 403.5h2M275 399.5h3M273 398.5h2M281 401.5h4" stroke="#9999ff"/>
<path d="M273 397.5h17" stroke="#ff99ff"/>
<path d="M276 431.5h6M287 429.5h3M273 432.5h3M282 430.5h5" stroke="#00c858"/>
<path d="M273 454.5h9M282 453.5h8" stroke="#ffa08c"/>
<path d="M273 463.5h17" stroke="#1ee6e0"/>
<path d="M273.5 384V406" stroke="#003377" stroke-width="1"/><rect x="270.5" y="391.5" width="6" height="7" fill="#662d91" stroke="#003377" stroke-width="1"/>
<path d="M257 398.5h17" stroke="#9999ff"/>
<path d="M270 397.5h4M257 399.5h5M262 398.5h8" stroke="#ff99ff"/>
<path d="M257 435.5h3M271 432.5h3M260 434.5h6M266 433.5h5" stroke="#00c858"/>
<path d="M270 454.5h4M262 455.5h8M257 456.5h5" stroke="#ffa08c"/>
<path d="M257 463.5h17" stroke="#1ee6e0"/>
<path d="M257.5 391V409" stroke="#003377" stroke-width="1"/><rect x="254.5" y="393.5" width="6" height="15" fill="#ffffff" stroke="#003377" stroke-width="1"/>
<path d="M251 397.5h4M247 396.5h4M255 398.5h3M243 395.5h4M241 394.5h2" stroke="#9999ff"/>
<path d="M243 403.5h3M246 402.5h4M250 401.5h3M256 399.5h2M241 404.5h2M253 400.5h3" stroke="#ff99ff"/>
<path d="M250 436.5h5M241 438.5h3M255 435.5h3M244 437.5h6" stroke="#00c858"/>
<path d="M241 457.5h9M250 456.5h8" stroke="#ffa08c"/>
<path d="M241 464.5h9M250 463.5h8" stroke="#1ee6e0"/>
<path d="M241.5 383V410" stroke="#003377" stroke-width="1"/><rect x="238.5" y="395.5" width="6" height="12" fill="#662d91" stroke="#003377" stroke-width="1"/>
<path d="M237 393.5h3M240 394.5h2M230 391.5h3M227 390.5h3M233 392.5h4M225 389.5h2" stroke="#9999ff"/>
<path d="M234 405.5h5M228 406.5h6M225 407.5h3M239 404.5h3" stroke="#ff99ff"/>
<path d="M225 441.5h3M234 439.5h5M239 438.5h3M228 440.5h6" stroke="#00c858"/>
<path d="M230 458.5h8M238 457.5h4M225 459.5h5" stroke="#ffa08c"/>
<path d="M225 464.5h17" stroke="#1ee6e0"/>
<path d="M225.5 387V398" stroke="#003377" stroke-width="1"/><rect x="222" y="394" width="7" height="2" fill="#003377" stroke="none"/>
<path d="M212 391.5h6M218 390.5h5M223 389.5h3M209 392.5h3" stroke="#9999ff"/>
<path d="M212 410.5h4M216 409.5h4M220 408.5h4M209 411.5h3M224 407.5h2" stroke="#ff99ff"/>
<path d="M218 442.5h5M223 441.5h3M212 443.5h6M209 444.5h3" stroke="#00c858"/>
<path d="M209 460.5h9M218 459.5h8" stroke="#ffa08c"/>
<path d="M209 464.5h17" stroke="#1ee6e0"/>
<path d="M209.5 380V400" stroke="#003377" stroke-width="1"/><rect x="206.5" y="383.5" width="6" height="9" fill="#662d91" stroke="#003377" stroke-width="1"/>
<path d="M195 397.5h3M198 396.5h2M206 393.5h2M200 395.5h3M208 392.5h2M203 394.5h3M193 398.5h2" stroke="#9999ff"/>
<path d="M195 416.5h3M198 415.5h2M203 413.5h3M206 412.5h2M200 414.5h3M208 411.5h2M193 417.5h2" stroke="#ff99ff"/>
<path d="M204 445.5h4M193 448.5h3M208 444.5h2M196 447.5h4M200 446.5h4" stroke="#00c858"/>
<path d="M198 461.5h8M206 460.5h4M193 462.5h5" stroke="#ffa08c"/>
<path d="M202 464.5h8M193 465.5h9" stroke="#1ee6e0"/>
<path d="M193.5 368V398" stroke="#003377" stroke-width="1"/><rect x="190.5" y="381.5" width="6" height="2" fill="#662d91" stroke="#003377" stroke-width="1"/>
<path d="M189 400.5h2M177 406.5h2M181 404.5h2M191 399.5h2M179 405.5h2M187 401.5h2M185 402.5h2M183 403.5h2M193.5 398v1" stroke="#9999ff"/>
<path d="M192 417.5h2M188 419.5h2M183 421.5h3M190 418.5h2M181 422.5h2M177 424.5h2M179 423.5h2M186 420.5h2" stroke="#ff99ff"/>
<path d="M182 451.5h4M186 450.5h3M192 448.5h2M177 453.5h2M189 449.5h3M179 452.5h3" stroke="#00c858"/>
<path d="M182 463.5h8M177 464.5h5M190 462.5h4" stroke="#ffa08c"/>
<path d="M177 465.5h17" stroke="#1ee6e0"/>
<path d="M177.5 381V412" stroke="#003377" stroke-width="1"/><rect x="174.5" y="384.5" width="6" height="24" fill="#ffffff" stroke="#003377" stroke-width="1"/>
<path d="M162 416.5h2M172 409.5h2M168 412.5h2M165 414.5h2M175 407.5h2M177.5 406v1M170.5 411v1M164.5 415v1M161.5 417v1M174.5 408v1M171.5 410v1M167.5 413v1" stroke="#9999ff"/>
<path d="M172 426.5h2M176 424.5h2M163 430.5h2M167 428.5h3M161 431.5h2M170 427.5h2M174 425.5h2M165 429.5h2" stroke="#ff99ff"/>
<path d="M172 454.5h4M161 457.5h3M176 453.5h2M164 456.5h4M168 455.5h4" stroke="#00c858"/>
<path d="M174 464.5h4M161 466.5h5M166 465.5h8" stroke="#ffa08c"/>
<path d="M161 466.5h9M170 465.5h8" stroke="#1ee6e0"/>
<path d="M161.5 408V424" stroke="#003377" stroke-width="1"/><rect x="158.5" y="409.5" width="6" height="5" fill="#ffffff" stroke="#003377" stroke-width="1"/>
</g>
<g shape-rendering="crispEdges" fill="none">
<path d="M12 555.5H1198" stroke="#ffa090" stroke-width="1" stroke-dasharray="6 4"/>
<path d="M12 592.5H1198" stroke="#ee0000" stroke-width="1" stroke-dasharray="6 4"/>
<path d="M12 628.5H1198" stroke="#ffa090" stroke-width="1" stroke-dasharray="6 4"/>
<path d="M12 679.5H1198" stroke="#ffa090" stroke-width="1" stroke-dasharray="6 4"/>
<path d="M12 779.5H1198" stroke="#ffa090" stroke-width="1" stroke-dasharray="6 4"/>
<path d="M300 577.5h2M311 577.5h3M507 577.5h2M694 577.5h2M976 527.5h4M1003 527.5h2M1069 527.5h2M1107 527.5h3M1147 527.5h3M366 585.5h6M493 585.5h2M642 585.5h2M711 585.5h2M746 585.5h2M358 586.5h8M372 586.5h5M491 586.5h2M638 586.5h4M713 586.5h3M454 595.5h2M432 602.5h3M462 592.5h2M473 592.5h9M309 578.5h2M652 578.5h2M696 578.5h2M767 578.5h4M256 546.5h4M904 546.5h2M336 566.5h2M802 566.5h2M856 566.5h3M871 566.5h3M484 590.5h2M725 590.5h8M738 590.5h2M163 517.5h3M964 530.5h4M1010 530.5h2M1063 530.5h2M1117 530.5h3M1139 530.5h3M605 616.5h5M353 587.5h5M377 587.5h6M630 587.5h8M716 587.5h2M743 587.5h2M201 524.5h2M988 524.5h4M995 524.5h2M1076 524.5h4M1097 524.5h4M1156 524.5h6M435 601.5h3M330 569.5h2M864 569.5h3M498 582.5h2M704 582.5h3M751 582.5h2M781 582.5h3M233 547.5h2M254 547.5h2M260 547.5h5M906 547.5h2M940 547.5h2M597 615.5h8M898 543.5h2M332 568.5h2M861 568.5h3M867 568.5h2M250 549.5h2M271 549.5h3M910 549.5h2M320 573.5h3M522 573.5h8M406 611.5h4M223 539.5h2M1025 539.5h2M980 526.5h4M1000 526.5h3M1071 526.5h2M1104 526.5h3M1150 526.5h2M456 594.5h3M826 555.5h5M834 555.5h2M227 542.5h2M947 542.5h2M972 528.5h4M1005 528.5h3M1067 528.5h2M1110 528.5h3M1144 528.5h3M961 531.5h3M1061 531.5h2M1120 531.5h19M252 548.5h2M265 548.5h6M908 548.5h2M938 548.5h2M984 525.5h4M997 525.5h3M1073 525.5h3M1101 525.5h3M1152 525.5h4M815 558.5h2M900 544.5h2M403 612.5h3M1084 522.5h4M1091 522.5h3M1167 522.5h11M807 563.5h2M849 563.5h2M878 563.5h2M170 515.5h3M185 515.5h6M241 553.5h2M923 553.5h4M930 553.5h2M297 575.5h2M316 575.5h2M511 575.5h2M531 575.5h2M690 575.5h2M293 572.5h2M323 572.5h2M438 600.5h4M574 600.5h2M383 588.5h3M488 588.5h2M625 588.5h5M718 588.5h2M847 562.5h2M880 562.5h2M305 580.5h2M502 580.5h2M537 580.5h2M700 580.5h2M756 580.5h6M774 580.5h3M238 551.5h2M245 551.5h2M915 551.5h4M902 545.5h2M943 545.5h2M1088 521.5h3M1178 521.5h8M214 534.5h2M1040 534.5h10M219 537.5h2M1021 537.5h2M1030 537.5h4M820 556.5h6M836 556.5h2M318 574.5h2M513 574.5h9M851 564.5h2M876 564.5h2M445 598.5h3M448 597.5h3M210 532.5h2M1013 532.5h2M1059 532.5h2M247 550.5h3M912 550.5h3M935 550.5h2M410 610.5h3M303 579.5h2M307 579.5h2M504 579.5h2M698 579.5h2M762 579.5h5M771 579.5h3M500 581.5h2M648 581.5h2M702 581.5h2M753 581.5h3M777 581.5h4M419 607.5h3M495 584.5h2M542 584.5h2M709 584.5h2M748 584.5h2M290 570.5h2M327 570.5h3M992 523.5h3M1080 523.5h4M1094 523.5h3M1162 523.5h5M486 589.5h2M720 589.5h5M740 589.5h2M451 596.5h3M176 513.5h4M645 583.5h2M707 583.5h2M784 583.5h2M430 603.5h2M570 603.5h2M427 604.5h3M212 533.5h2M958 533.5h2M1015 533.5h2M1050 533.5h9M413 609.5h3M562 609.5h2M1018 535.5h2M1037 535.5h3M166 516.5h4M191 516.5h3M442 599.5h3M243 552.5h2M919 552.5h4M932 552.5h2M968 529.5h4M1008 529.5h2M1065 529.5h2M1113 529.5h4M1142 529.5h2M424 605.5h3M173 514.5h3M180 514.5h5M464 591.5h9M482 591.5h2M733 591.5h5M804 565.5h2M853 565.5h3M874 565.5h2M810 561.5h2M845 561.5h2M221 538.5h2M952 538.5h2M1023 538.5h2M1027 538.5h3M831 554.5h3M927 554.5h3M812 560.5h2M843 560.5h2M161 518.5h2M841 559.5h2M422 606.5h2M566 606.5h2M334 567.5h2M859 567.5h2M869 567.5h2M401 613.5h2M314 576.5h2M509 576.5h2M655 576.5h2M692 576.5h2M459 593.5h3M817 557.5h3M838 557.5h2M416 608.5h3M217 536.5h2M1034 536.5h3M593 614.5h4M325 571.5h2M345.5 576v2M534.5 577v1M654.5 577v1M659.5 577v1M686.5 577v1M791.5 577v1M205.5 527v1M351.5 584v2M544.5 585v1M667.5 585v1M679.5 585v1M352.5 586v1M545.5 586v1M668.5 586v1M678.5 586v1M745.5 586v1M389.5 594v2M551.5 595v1M621.5 595v1M394.5 602v1M556.5 602v2M572.5 602v1M581.5 602v1M617.5 602v1M388.5 592v2M549.5 592v1M623.5 591v2M302.5 578v1M346.5 578v1M506.5 578v1M535.5 578v1M660.5 578v1M685.5 578v1M790.5 578v1M232.5 546v1M894.5 546v1M942.5 546v1M287.5 566v2M386.5 589v2M548.5 590v2M624.5 589v2M672.5 590v1M674.5 590v1M194.5 517v1M208.5 530v1M490.5 587v1M546.5 587v2M669.5 587v1M677.5 587v1M393.5 600v2M555.5 601v1M573.5 601v1M580.5 601v1M618.5 600v2M289.5 569v1M339.5 568v2M799.5 569v1M349.5 582v1M540.5 582v1M647.5 582v1M664.5 582v1M681.5 582v2M786.5 582v1M893.5 547v1M610.5 614v2M229.5 543v1M896.5 543v1M946.5 543v1M288.5 568v1M800.5 568v1M236.5 549v1M891.5 549v2M937.5 549v1M295.5 573v1M342.5 572v2M795.5 573v1M400.5 611v2M590.5 611v1M612.5 610v2M951.5 539v1M204.5 526v1M550.5 593v2M622.5 593v2M278.5 555v1M887.5 554v2M897.5 542v1M206.5 528v1M209.5 531v1M1012.5 531v1M235.5 548v1M892.5 548v1M203.5 525v1M280.5 558v1M840.5 558v1M884.5 558v1M230.5 544v1M895.5 544v2M945.5 544v1M591.5 612v1M611.5 612v2M199.5 522v1M284.5 563v1M276.5 553v1M888.5 553v1M344.5 575v1M657.5 575v1M688.5 575v1M793.5 575v1M796.5 572v1M554.5 599v2M579.5 600v1M670.5 588v1M676.5 588v1M742.5 588v1M283.5 561v2M809.5 562v1M348.5 580v2M650.5 580v1M662.5 580v1M683.5 580v1M788.5 580v1M275.5 551v2M890.5 551v1M934.5 551v1M231.5 545v1M198.5 521v1M957.5 534v1M1017.5 534v1M954.5 537v1M279.5 556v2M886.5 556v1M296.5 574v1M343.5 574v1M530.5 574v1M689.5 574v1M794.5 574v1M285.5 564v1M806.5 564v1M391.5 597v2M553.5 598v1M577.5 598v1M619.5 598v2M552.5 596v2M620.5 596v2M960.5 532v1M237.5 550v1M274.5 550v1M399.5 610v1M561.5 610v1M589.5 610v1M347.5 579v1M536.5 579v1M651.5 579v1M661.5 579v1M684.5 579v1M789.5 579v1M539.5 581v1M663.5 581v1M682.5 581v1M787.5 581v1M397.5 606v2M559.5 607v1M565.5 607v1M586.5 607v1M614.5 607v2M644.5 584v1M666.5 584v1M680.5 584v1M340.5 570v1M798.5 570v1M200.5 523v1M547.5 589v1M671.5 589v1M675.5 589v1M390.5 596v1M350.5 583v1M497.5 583v1M541.5 583v1M665.5 583v1M750.5 583v1M395.5 603v2M582.5 603v1M616.5 603v2M557.5 604v1M569.5 604v1M583.5 604v1M398.5 608v2M560.5 608v2M588.5 609v1M613.5 609v1M216.5 535v1M956.5 535v1M392.5 599v1M576.5 599v1M578.5 599v1M240.5 552v1M889.5 552v1M207.5 529v1M396.5 605v1M558.5 605v2M568.5 605v1M584.5 605v1M615.5 605v2M387.5 591v1M673.5 591v1M286.5 565v1M882.5 561v1M277.5 554v1M282.5 560v1M883.5 559v2M195.5 518v1M281.5 559v1M814.5 559v1M585.5 606v1M338.5 567v1M801.5 567v1M592.5 613v1M299.5 576v1M533.5 576v1M658.5 576v1M687.5 576v1M792.5 576v1M885.5 557v1M564.5 608v1M587.5 608v1M196.5 519v1M955.5 536v1M1020.5 536v1M225.5 540v1M950.5 540v1M292.5 571v1M341.5 571v1M797.5 571v1M197.5 520v1M226.5 541v1M949.5 541v1" stroke="#3282ff" stroke-width="1" fill="none"/>
<path d="M904 537.5h4M1060 537.5h2M1118 537.5h2M367 599.5h2M565 599.5h2M293 595.5h2M374 595.5h2M480 595.5h2M668 595.5h2M173 512.5h2M975 512.5h4M1158 512.5h2M340 601.5h2M363 601.5h2M435 582.5h2M800 582.5h2M846 582.5h2M851 582.5h2M169 514.5h2M964 514.5h6M1154 514.5h2M163 517.5h2M941 517.5h9M627 620.5h2M1027 546.5h3M372 596.5h2M881 542.5h3M1040 542.5h4M1131 542.5h2M705 561.5h5M767 561.5h2M348 605.5h2M356 605.5h2M575 605.5h2M840 579.5h2M858 579.5h2M908 536.5h4M1116 536.5h2M1037 543.5h3M1133 543.5h3M542 571.5h2M718 559.5h8M352 607.5h2M381 591.5h2M472 591.5h2M525 580.5h2M531 580.5h2M842 580.5h2M855 580.5h3M219 529.5h2M1073 529.5h3M1097 529.5h4M700 564.5h2M527 581.5h2M844 581.5h2M853 581.5h2M402 612.5h2M217 528.5h2M1076 528.5h6M1094 528.5h3M178 509.5h2M983 509.5h2M1163 509.5h2M900 538.5h4M1058 538.5h2M1120 538.5h3M692 569.5h2M890 540.5h5M1050 540.5h5M1125 540.5h3M468 589.5h2M252 553.5h2M746 553.5h2M703 562.5h2M440 578.5h2M522 578.5h2M838 578.5h2M860 578.5h2M985 508.5h2M1165 508.5h2M593 623.5h21M476 593.5h2M665 593.5h2M171 513.5h2M970 513.5h5M1156 513.5h2M912 535.5h2M1063 535.5h2M1113 535.5h3M243 557.5h2M734 557.5h5M165 516.5h2M933 516.5h8M950 516.5h8M250 554.5h2M743 554.5h3M884 541.5h6M1044 541.5h6M1128 541.5h3M790 586.5h2M798 583.5h2M848 583.5h3M1066 533.5h2M1109 533.5h2M981 510.5h2M1082 527.5h5M1091 527.5h3M247 555.5h3M741 555.5h2M759 555.5h2M836 577.5h2M862 577.5h2M629 619.5h2M256 551.5h2M750 551.5h2M406 609.5h2M241 558.5h2M726 558.5h8M763 558.5h2M301 602.5h2M342 602.5h2M570 602.5h2M519 576.5h2M536 576.5h2M834 576.5h2M864 576.5h2M1111 534.5h2M175 511.5h2M979 511.5h2M1160 511.5h2M698 565.5h2M622 621.5h5M466 588.5h2M658 588.5h2M785 588.5h2M795 584.5h3M181 507.5h2M987 507.5h2M1167 507.5h2M344 603.5h2M360 603.5h2M414 603.5h2M710 560.5h8M350 606.5h2M354 606.5h2M410 606.5h2M221 530.5h2M1071 530.5h2M1101 530.5h3M212 525.5h2M338 600.5h2M365 600.5h2M567 600.5h2M184 505.5h2M991 505.5h2M383 590.5h2M470 590.5h2M661 590.5h2M633 617.5h2M223 531.5h2M1104 531.5h3M895 539.5h5M1055 539.5h3M1123 539.5h2M446 573.5h2M514 573.5h2M1034 544.5h3M1136 544.5h2M690 570.5h2M245 556.5h2M739 556.5h2M379 592.5h2M474 592.5h2M989 506.5h2M1169 506.5h17M614 622.5h8M370 597.5h2M562 597.5h2M671 597.5h2M346 604.5h2M358 604.5h2M573 604.5h2M376 594.5h2M478 594.5h2M792 585.5h3M1068 532.5h2M1107 532.5h2M161 518.5h2M787 587.5h3M210 524.5h2M517 575.5h2M1025 547.5h2M167 515.5h2M929 515.5h4M958 515.5h6M1030 545.5h4M214 526.5h2M1087 526.5h4M695 567.5h2M639 614.5h2M637 615.5h2M254 552.5h2M497 552.5h2M748 552.5h2M755 552.5h2M188 502.5h2M752 550.5h2M191 500.5h2M635 616.5h2M631 618.5h2M228.5 537v1M1017.5 537v2M1141.5 536v2M298.5 599v1M337.5 599v1M392.5 599v2M419.5 599v1M650.5 598v2M389.5 595v1M423.5 595v1M560.5 594v2M652.5 595v1M675.5 594v2M202.5 512v2M998.5 511v2M308.5 608v1M330.5 608v2M398.5 608v2M408.5 608v1M579.5 608v1M644.5 608v1M300.5 601v1M336.5 600v2M393.5 601v1M417.5 601v1M569.5 601v1M648.5 601v2M282.5 582v1M460.5 582v1M486.5 580v3M529.5 582v1M553.5 582v2M682.5 582v2M781.5 581v2M203.5 514v1M1000.5 514v2M205.5 517v1M927.5 517v2M1002.5 517v2M1152.5 516v2M320.5 620v1M322.5 619v2M590.5 620v1M234.5 546v2M879.5 546v2M1024.5 546v1M295.5 596v1M390.5 596v2M422.5 596v1M561.5 596v1M651.5 596v2M670.5 596v1M674.5 596v2M231.5 541v2M1021.5 542v1M1138.5 542v2M265.5 561v1M493.5 561v3M505.5 561v2M815.5 561v1M820.5 561v1M872.5 561v2M305.5 605v1M333.5 604v2M396.5 605v2M412.5 605v1M646.5 605v1M279.5 578v2M439.5 579v1M457.5 579v1M487.5 578v2M524.5 579v1M533.5 579v1M551.5 579v1M684.5 579v2M779.5 578v2M803.5 579v1M269.5 566v1M492.5 564v3M508.5 565v2M697.5 566v1M771.5 565v2M812.5 565v2M825.5 566v2M870.5 565v2M227.5 535v2M1016.5 536v1M1062.5 536v1M232.5 543v2M881.5 543v1M1022.5 543v2M273.5 571v1M449.5 571v1M490.5 569v3M512.5 571v1M546.5 570v2M689.5 571v1M775.5 571v2M808.5 571v2M829.5 571v1M867.5 571v2M311.5 611v1M328.5 611v2M400.5 611v2M404.5 611v1M582.5 611v1M642.5 611v2M263.5 558v2M494.5 558v3M503.5 559v1M765.5 559v1M816.5 559v2M818.5 559v1M873.5 558v3M307.5 607v1M331.5 607v1M397.5 607v1M409.5 607v1M578.5 607v1M645.5 606v2M289.5 591v1M386.5 590v2M426.5 591v1M482.5 591v3M558.5 591v1M655.5 590v2M663.5 591v1M677.5 591v2M280.5 580v1M438.5 580v1M458.5 580v1M552.5 580v2M780.5 580v1M802.5 580v2M918.5 529v1M1010.5 529v1M1145.5 529v2M275.5 573v2M445.5 574v1M452.5 574v1M489.5 572v3M516.5 574v1M539.5 574v1M548.5 574v1M687.5 574v2M776.5 573v2M806.5 574v2M832.5 574v1M866.5 573v2M267.5 563v2M507.5 564v1M770.5 563v2M813.5 564v1M823.5 564v1M871.5 563v2M281.5 581v1M437.5 581v1M459.5 581v1M530.5 581v1M683.5 581v1M312.5 612v1M583.5 612v1M919.5 527v2M1009.5 528v1M1146.5 527v2M200.5 509v2M996.5 508v2M229.5 538v2M1140.5 538v2M271.5 568v2M511.5 569v2M545.5 569v1M773.5 568v2M810.5 568v2M827.5 569v1M868.5 569v2M230.5 540v1M1019.5 540v1M1139.5 540v2M287.5 588v2M385.5 589v1M428.5 589v1M483.5 589v2M557.5 589v2M656.5 588v2M660.5 589v1M678.5 589v2M238.5 553v1M259.5 553v2M496.5 553v3M499.5 553v2M757.5 553v1M876.5 552v2M266.5 562v1M769.5 562v1M814.5 562v2M821.5 562v1M456.5 578v1M534.5 578v1M550.5 577v2M685.5 577v2M804.5 577v2M180.5 508v1M199.5 508v1M313.5 613v1M327.5 613v1M401.5 613v1M584.5 613v1M641.5 613v1M291.5 593v1M378.5 593v1M388.5 593v2M425.5 592v2M559.5 592v2M653.5 593v2M676.5 593v1M999.5 513v1M1015.5 535v1M1142.5 535v1M240.5 556v2M262.5 557v1M495.5 556v2M502.5 557v2M762.5 557v1M874.5 556v2M204.5 515v2M928.5 516v1M1001.5 516v1M239.5 554v2M758.5 554v1M875.5 554v2M1020.5 541v1M285.5 586v1M431.5 586v1M464.5 586v1M484.5 586v3M555.5 586v1M680.5 586v2M784.5 586v2M283.5 583v2M434.5 583v1M461.5 583v1M485.5 583v3M782.5 583v1M226.5 533v2M915.5 532v2M1013.5 533v1M1143.5 533v2M177.5 510v1M997.5 510v1M1162.5 510v1M216.5 527v1M1008.5 526v2M235.5 548v2M878.5 548v2M260.5 555v1M500.5 555v1M278.5 577v1M442.5 577v1M455.5 577v1M488.5 575v3M521.5 577v1M535.5 577v1M778.5 576v2M319.5 619v1M589.5 619v1M237.5 551v2M497.5 551v1M754.5 551v1M877.5 550v2M186.5 504v1M196.5 503v2M993.5 504v1M309.5 609v1M580.5 609v1M643.5 609v2M817.5 558v1M335.5 602v1M362.5 602v1M394.5 602v2M416.5 602v1M277.5 576v1M443.5 576v1M454.5 576v1M549.5 575v2M686.5 576v1M805.5 576v1M914.5 534v1M1014.5 534v1M1065.5 534v1M201.5 511v1M209.5 523v1M923.5 522v2M1006.5 523v2M1149.5 522v2M268.5 565v1M824.5 565v1M321.5 621v1M591.5 621v1M429.5 588v1M556.5 587v2M679.5 588v1M433.5 584v1M462.5 584v1M554.5 584v2M681.5 584v2M783.5 584v2M198.5 506v2M995.5 507v1M190.5 501v1M194.5 500v2M303.5 603v1M334.5 603v1M572.5 603v1M647.5 603v2M264.5 560v1M504.5 560v1M766.5 560v1M819.5 560v1M306.5 606v1M332.5 606v1M577.5 606v1M917.5 530v1M1011.5 530v1M921.5 525v1M1007.5 525v1M1147.5 525v2M299.5 600v1M418.5 600v1M649.5 600v1M197.5 505v1M994.5 505v2M288.5 590v1M427.5 590v1M317.5 617v1M324.5 617v1M587.5 617v1M916.5 531v1M1012.5 531v2M1070.5 531v1M1144.5 531v2M1018.5 539v1M451.5 573v1M540.5 573v1M547.5 572v2M688.5 572v2M807.5 573v1M831.5 573v1M880.5 544v2M272.5 570v1M544.5 570v1M774.5 570v1M809.5 570v1M828.5 570v1M206.5 518v2M926.5 519v1M1003.5 519v1M1151.5 518v2M274.5 572v1M448.5 572v1M450.5 572v1M513.5 572v1M541.5 572v1M830.5 572v1M261.5 556v1M501.5 556v1M761.5 556v1M290.5 592v1M387.5 592v1M654.5 592v1M664.5 592v1M183.5 506v1M592.5 622v1M506.5 563v1M702.5 563v1M822.5 563v1M208.5 521v2M1005.5 522v1M296.5 597v1M421.5 597v1M304.5 604v1M395.5 604v1M413.5 604v1M292.5 594v1M424.5 594v1M481.5 594v1M667.5 594v1M284.5 585v1M432.5 585v1M463.5 585v1M491.5 567v2M510.5 568v1M694.5 568v1M826.5 568v1M869.5 567v2M225.5 532v1M297.5 598v1M369.5 598v1M391.5 598v1M420.5 598v1M564.5 598v1M673.5 598v1M310.5 610v1M329.5 610v1M399.5 610v1M405.5 610v1M581.5 610v1M286.5 587v1M430.5 587v1M465.5 587v1M657.5 587v1M922.5 524v1M1148.5 524v1M276.5 575v1M444.5 575v1M453.5 575v1M538.5 575v1M777.5 575v1M833.5 575v1M865.5 575v1M1153.5 515v1M233.5 545v1M1023.5 545v1M924.5 521v1M1004.5 520v2M1150.5 520v2M920.5 526v1M270.5 567v1M509.5 567v1M772.5 567v1M811.5 567v1M314.5 614v1M326.5 614v1M585.5 614v2M315.5 615v1M325.5 615v2M258.5 552v1M207.5 520v1M925.5 520v1M195.5 502v1M236.5 550v1M187.5 503v1M316.5 616v1M586.5 616v1M318.5 618v1M323.5 618v1M588.5 618v1M193.5 499v1" stroke="#00c85a" stroke-width="1" fill="none"/>
<path d="M270 547.5h2M967 547.5h3M1016 547.5h3M1039 547.5h10M1058 547.5h2M553 590.5h4M639 590.5h2M649 590.5h11M735 590.5h2M1135 533.5h7M526 582.5h2M765 582.5h3M389 572.5h2M444 572.5h4M451 572.5h4M490 572.5h9M880 572.5h4M992 536.5h2M1073 536.5h9M1093 536.5h8M1114 536.5h10M367 568.5h10M900 568.5h6M318 561.5h2M935 561.5h3M579 607.5h4M607 607.5h4M436 574.5h4M459 574.5h4M470 574.5h8M503 574.5h4M704 574.5h3M826 574.5h9M872 574.5h4M182 526.5h4M199 526.5h2M1166 526.5h2M272 548.5h2M965 548.5h2M1019 548.5h2M1034 548.5h5M1049 548.5h9M543 587.5h4M779 587.5h2M206 529.5h2M1158 529.5h2M1082 535.5h11M1124 535.5h6M547 588.5h3M732 588.5h2M781 588.5h3M391 573.5h2M440 573.5h4M455 573.5h4M478 573.5h12M499 573.5h4M876 573.5h4M238 543.5h2M248 543.5h4M261 543.5h2M976 543.5h3M1006 543.5h2M394 575.5h2M416 575.5h20M463 575.5h7M507 575.5h4M700 575.5h4M707 575.5h2M801 575.5h25M835 575.5h4M868 575.5h4M412 576.5h4M511 576.5h4M696 576.5h4M709 576.5h3M839 576.5h4M862 576.5h6M377 569.5h9M895 569.5h5M960 550.5h3M1024 550.5h4M990 537.5h2M994 537.5h2M1101 537.5h13M361 567.5h6M906 567.5h5M386 570.5h2M890 570.5h5M631 595.5h2M291 563.5h4M312 563.5h3M931 563.5h2M583 608.5h4M602 608.5h5M550 589.5h3M641 589.5h8M739 589.5h2M784 589.5h2M615 604.5h2M277 552.5h2M956 552.5h2M256 541.5h3M981 541.5h2M1002 541.5h2M1066 541.5h2M179 527.5h3M201 527.5h3M1163 527.5h3M189 524.5h3M195 524.5h2M1171 524.5h2M560 592.5h2M636 592.5h2M665 592.5h6M164 539.5h2M233 539.5h2M986 539.5h2M998 539.5h2M963 549.5h2M1021 549.5h3M1028 549.5h6M208 530.5h5M1155 530.5h3M241 545.5h3M265 545.5h3M972 545.5h2M1011 545.5h2M628 597.5h2M539 586.5h4M680 586.5h2M729 586.5h2M776 586.5h3M788 586.5h2M988 538.5h2M996 538.5h2M1070 538.5h2M328 557.5h3M341 557.5h2M944 557.5h3M619 602.5h2M1178 521.5h2M320 560.5h3M345 560.5h2M938 560.5h2M557 591.5h3M660 591.5h5M399 578.5h2M404 578.5h4M517 578.5h2M689 578.5h3M715 578.5h2M753 578.5h2M847 578.5h7M983 540.5h3M1000 540.5h2M528 583.5h3M725 583.5h2M768 583.5h3M186 525.5h3M197 525.5h2M1168 525.5h3M192 523.5h3M1173 523.5h2M535 585.5h4M744 585.5h2M773 585.5h3M397 577.5h2M408 577.5h4M515 577.5h2M692 577.5h4M712 577.5h3M843 577.5h4M854 577.5h8M285 559.5h2M323 559.5h3M940 559.5h2M531 584.5h4M771 584.5h2M303 566.5h4M356 566.5h5M911 566.5h7M213 531.5h8M1150 531.5h5M295 564.5h4M310 564.5h2M351 564.5h2M926 564.5h5M299 565.5h4M307 565.5h3M353 565.5h3M918 565.5h8M268 546.5h2M970 546.5h2M1013 546.5h3M448 571.5h3M884 571.5h6M336 554.5h2M951 554.5h3M227 534.5h2M1130 534.5h5M587 609.5h4M596 609.5h6M244 544.5h4M263 544.5h2M974 544.5h2M1008 544.5h3M1062 544.5h2M401 579.5h3M519 579.5h2M717 579.5h3M755 579.5h3M796 579.5h2M331 556.5h3M947 556.5h2M623 600.5h2M172 532.5h2M221 532.5h5M1142 532.5h8M621 601.5h2M524 581.5h2M722 581.5h2M761 581.5h4M252 542.5h4M259 542.5h2M979 542.5h2M1004 542.5h2M1184 518.5h2M591 610.5h5M577 606.5h2M611 606.5h2M634 593.5h2M671 593.5h3M521 580.5h3M720 580.5h2M750 580.5h2M758 580.5h3M958 551.5h2M565 596.5h2M289 562.5h2M315 562.5h3M348 562.5h2M933 562.5h2M177 528.5h2M204 528.5h2M1160 528.5h3M954 553.5h2M1182 519.5h2M613 605.5h2M573 603.5h2M617 603.5h2M334 555.5h2M338 555.5h2M949 555.5h2M326 558.5h2M942 558.5h2M1180 520.5h2M1175 522.5h3M626 598.5h2M676.5 590v1M738.5 590v1M171.5 533v1M226.5 533v1M685.5 582v1M724.5 582v1M748.5 582v1M793.5 582v1M168.5 536v1M230.5 536v1M288.5 561v1M347.5 561v1M393.5 574v1M679.5 587v1M731.5 587v1M742.5 587v1M787.5 587v1M176.5 529v1M169.5 535v1M229.5 535v1M678.5 588v1M741.5 588v1M786.5 588v1M1064.5 543v1M396.5 576v1M800.5 576v1M275.5 550v1M167.5 537v1M231.5 537v1M1072.5 537v1M564.5 595v1M350.5 563v1M677.5 589v1M734.5 589v1M575.5 604v1M162.5 541v1M236.5 541v1M674.5 592v1M1069.5 539v1M274.5 549v1M175.5 530v1M1061.5 545v1M567.5 597v1M743.5 586v1M166.5 538v1M232.5 538v1M283.5 557v1M572.5 602v1M287.5 560v1M638.5 591v1M675.5 591v1M737.5 591v1M798.5 578v1M163.5 540v1M235.5 540v1M1068.5 540v1M684.5 583v1M747.5 583v1M792.5 583v1M682.5 585v1M728.5 585v1M790.5 585v1M799.5 577v1M344.5 559v1M683.5 584v1M727.5 584v1M746.5 584v1M791.5 584v1M174.5 531v1M1060.5 546v1M388.5 571v1M280.5 554v1M170.5 534v1M240.5 544v1M688.5 579v1M752.5 579v1M282.5 556v1M340.5 556v1M570.5 600v1M571.5 601v1M686.5 581v1M749.5 581v1M794.5 581v1M161.5 542v1M237.5 542v1M1065.5 542v1M562.5 593v1M687.5 580v1M795.5 580v1M276.5 551v1M630.5 596v1M279.5 553v1M576.5 605v1M281.5 555v1M284.5 558v1M343.5 558v1M563.5 594v1M633.5 594v1M569.5 599v1M625.5 599v1M568.5 598v1" stroke="#be00be" stroke-width="1" fill="none"/>
<path d="M867 680.5h3M172 660.5h2M199 660.5h2M987 660.5h3M1023 660.5h11M1049 660.5h45M1109 660.5h3M305 721.5h8M507 721.5h3M533 721.5h8M361 739.5h6M257 695.5h2M807 695.5h2M161 665.5h2M211 665.5h2M972 665.5h4M1124 665.5h5M1168 665.5h9M429 762.5h3M163 664.5h2M208 664.5h3M976 664.5h3M1120 664.5h4M272 702.5h2M710 702.5h2M785 702.5h3M274 703.5h2M708 703.5h2M176 658.5h10M195 658.5h2M992 658.5h6M1015 658.5h4M1102 658.5h5M831 686.5h20M213 666.5h2M945 666.5h4M968 666.5h4M1129 666.5h6M1164 666.5h4M1177 666.5h9M244 688.5h2M753 688.5h3M820 688.5h6M880 675.5h5M922 675.5h5M402 756.5h2M454 756.5h8M609 784.5h8M626 784.5h2M170 661.5h2M201 661.5h3M984 661.5h3M1112 661.5h3M278 705.5h2M215 667.5h2M943 667.5h2M949 667.5h8M964 667.5h4M1135 667.5h6M1160 667.5h4M186 657.5h9M998 657.5h8M1011 657.5h4M373 741.5h8M246 689.5h2M751 689.5h2M756 689.5h5M817 689.5h3M462 755.5h4M661 755.5h2M854 684.5h4M864 681.5h3M276 704.5h2M706 704.5h2M217 668.5h3M941 668.5h2M957 668.5h7M1141 668.5h8M1156 668.5h4M927 674.5h4M174 659.5h2M197 659.5h2M990 659.5h2M1019 659.5h4M1034 659.5h15M1094 659.5h8M1107 659.5h2M167 662.5h3M204 662.5h2M982 662.5h2M1115 662.5h2M325 723.5h8M502 723.5h2M875 677.5h3M893 677.5h23M270 701.5h2M712 701.5h2M783 701.5h2M788 701.5h6M1006 656.5h5M353 737.5h3M488 730.5h2M398 753.5h2M664 753.5h2M350 735.5h2M261 697.5h2M719 697.5h2M725 697.5h8M738 697.5h2M777 697.5h2M804 697.5h2M233 679.5h2M870 679.5h2M440 759.5h4M436 760.5h4M933 672.5h2M313 722.5h12M504 722.5h3M541 722.5h5M484 732.5h2M265 699.5h3M715 699.5h2M780 699.5h2M799 699.5h3M448 757.5h6M658 757.5h2M606 782.5h2M630 782.5h2M298 717.5h2M381 742.5h5M761 690.5h6M815 690.5h2M301 719.5h2M512 719.5h9M639 777.5h2M671 748.5h2M293 714.5h2M242 687.5h2M826 687.5h5M405 758.5h2M444 758.5h4M617 785.5h9M303 720.5h2M510 720.5h2M521 720.5h12M415 765.5h2M419 765.5h3M668 750.5h2M861 682.5h3M497 725.5h2M409 761.5h2M432 761.5h4M268 700.5h2M794 700.5h5M259 696.5h2M721 696.5h4M740 696.5h2M412 763.5h2M426 763.5h3M872 678.5h3M251 692.5h2M746 692.5h2M770 692.5h2M812 692.5h2M220 669.5h2M939 669.5h2M1149 669.5h7M367 740.5h6M165 663.5h2M206 663.5h2M979 663.5h3M1117 663.5h3M417 766.5h2M249 691.5h2M748 691.5h2M767 691.5h3M339 726.5h2M495 726.5h2M878 676.5h2M885 676.5h8M916 676.5h6M491 728.5h2M333 724.5h5M499 724.5h3M595 773.5h2M387 744.5h2M345 731.5h2M486 731.5h2M281 707.5h2M290 712.5h2M263 698.5h2M717 698.5h2M733 698.5h5M802 698.5h2M224 671.5h2M935 671.5h2M356 738.5h5M253 693.5h2M810 693.5h2M285 709.5h2M255 694.5h2M743 694.5h2M773 694.5h2M632 781.5h2M851 685.5h3M222 670.5h2M937 670.5h2M601 778.5h2M637 778.5h2M287 710.5h2M628 783.5h2M482 733.5h2M858 683.5h3M422 764.5h4M585 764.5h2M393 749.5h2M493 727.5h2M283 708.5h2M295 715.5h2M635 779.5h2M931 673.5h2M235.5 680v1M691.5 721v1M598.5 775v1M642.5 775v1M477.5 739v1M562.5 739v1M678.5 739v2M742.5 695v1M775.5 695v1M604.5 780v1M634.5 780v1M280.5 706v1M704.5 706v1M411.5 762v1M583.5 762v1M653.5 762v2M241.5 686v1M229.5 675v1M577.5 756v1M660.5 756v1M705.5 705v1M476.5 740v2M564.5 741v1M677.5 741v1M401.5 755v1M576.5 755v1M239.5 684v1M236.5 681v1M228.5 674v1M546.5 723v1M689.5 723v1M231.5 677v1M479.5 736v2M560.5 737v1M680.5 736v2M344.5 730v1M553.5 730v1M684.5 730v2M467.5 752v2M574.5 753v1M480.5 735v1M558.5 735v1M681.5 735v1M407.5 759v1M580.5 759v1M656.5 759v1M408.5 760v1M581.5 760v1M655.5 760v1M226.5 672v1M690.5 722v1M347.5 732v1M555.5 732v1M683.5 732v1M404.5 757v1M578.5 757v1M694.5 717v1M475.5 742v1M565.5 742v2M676.5 742v2M248.5 690v1M750.5 690v1M693.5 718v2M600.5 777v1M392.5 748v1M470.5 748v2M570.5 748v1M697.5 714v1M579.5 758v1M657.5 758v1M692.5 720v1M587.5 765v1M651.5 765v1M589.5 767v1M649.5 767v1M395.5 750v1M469.5 750v1M572.5 750v1M237.5 682v1M338.5 725v1M548.5 725v1M688.5 724v2M391.5 747v1M471.5 747v1M569.5 747v1M673.5 747v1M343.5 729v1M490.5 729v1M552.5 729v1M685.5 729v1M582.5 761v1M654.5 761v1M714.5 700v1M782.5 700v1M776.5 696v1M806.5 696v1M584.5 763v1M232.5 678v1M563.5 740v1M588.5 766v1M650.5 766v1M814.5 691v1M549.5 726v1M687.5 726v1M230.5 676v1M342.5 728v1M551.5 728v1M686.5 727v2M547.5 724v1M644.5 773v1M473.5 744v2M566.5 744v1M675.5 744v1M297.5 716v1M695.5 716v1M599.5 776v1M641.5 776v1M554.5 731v1M289.5 711v1M700.5 711v1M703.5 707v1M699.5 712v1M779.5 698v1M352.5 736v1M559.5 736v1M478.5 738v1M561.5 738v1M679.5 738v1M745.5 693v1M772.5 693v1M701.5 709v2M386.5 743v1M474.5 743v1M809.5 694v1M605.5 781v1M240.5 685v1M608.5 783v1M348.5 733v1M556.5 733v1M682.5 733v2M349.5 734v1M481.5 734v1M557.5 734v1M396.5 751v1M468.5 751v1M573.5 751v2M667.5 751v1M238.5 683v1M414.5 764v1M652.5 764v1M571.5 749v1M670.5 749v1M389.5 745v1M567.5 745v1M674.5 745v2M341.5 727v1M550.5 727v1M590.5 768v1M648.5 768v1M591.5 769v1M647.5 769v1M702.5 708v1M696.5 715v1M597.5 774v1M643.5 774v1M592.5 770v1M646.5 770v1M603.5 779v1M397.5 752v1M666.5 752v1M400.5 754v1M466.5 754v1M575.5 754v1M663.5 754v1M227.5 673v1M594.5 772v1M645.5 771v2M593.5 771v1M390.5 746v1M472.5 746v1M568.5 746v1M300.5 718v1M292.5 713v1M698.5 713v1" stroke="#3282ff" stroke-width="1" fill="none"/>
<path d="M344 725.5h3M515 725.5h3M556 725.5h2M368 734.5h3M501 734.5h2M620 778.5h2M649 778.5h2M412 752.5h2M475 752.5h2M357 730.5h3M180 663.5h4M219 663.5h4M991 663.5h5M1133 663.5h6M271 693.5h2M758 693.5h8M777 693.5h10M829 693.5h3M184 662.5h4M215 662.5h4M996 662.5h4M1125 662.5h8M395 744.5h2M906 676.5h26M192 660.5h19M1004 660.5h4M1053 660.5h45M1109 660.5h8M616 776.5h2M653 776.5h2M164 667.5h4M229 667.5h2M970 667.5h5M1151 667.5h27M269 692.5h2M766 692.5h11M832 692.5h3M384 740.5h3M349 727.5h3M511 727.5h2M560 727.5h2M331 721.5h4M528 721.5h10M547 721.5h2M282 699.5h2M739 699.5h3M622 779.5h2M647 779.5h2M629 781.5h8M643 781.5h2M884 679.5h6M614 775.5h2M655 775.5h2M432 761.5h20M188 661.5h4M211 661.5h4M1000 661.5h4M1117 661.5h8M261 687.5h2M848 687.5h4M610 773.5h2M658 773.5h2M335 722.5h4M525 722.5h3M549 722.5h2M624 780.5h5M645 780.5h2M1008 659.5h10M1045 659.5h8M1098 659.5h11M842 689.5h3M1018 658.5h27M168 666.5h4M975 666.5h5M1147 666.5h4M1178 666.5h8M414 753.5h2M637 782.5h6M874 681.5h5M938 674.5h5M176 664.5h4M223 664.5h3M986 664.5h5M1139 664.5h4M172 665.5h4M226 665.5h2M980 665.5h6M1143 665.5h4M339 723.5h2M522 723.5h3M551 723.5h2M245 677.5h2M895 677.5h11M387 741.5h2M618 777.5h2M651 777.5h2M274 695.5h2M750 695.5h2M791 695.5h4M822 695.5h4M852 686.5h4M258 685.5h2M856 685.5h4M161 668.5h3M231 668.5h2M964 668.5h6M266 690.5h2M838 690.5h4M612 774.5h2M278 697.5h2M744 697.5h3M799 697.5h20M234 670.5h2M956 670.5h4M341 724.5h3M518 724.5h4M553 724.5h3M286 701.5h2M735 701.5h2M327 720.5h4M538 720.5h9M416 754.5h3M472 754.5h2M373 736.5h3M498 736.5h2M290 703.5h2M731 703.5h2M263 688.5h2M845 688.5h3M304 710.5h2M237 672.5h2M948 672.5h4M952 671.5h4M421 756.5h2M468 756.5h2M253 682.5h2M868 682.5h6M752 694.5h6M787 694.5h4M826 694.5h3M355 729.5h2M508 729.5h2M563 729.5h2M242 675.5h2M932 675.5h6M247 678.5h2M890 678.5h5M347 726.5h2M513 726.5h2M558 726.5h2M320 718.5h3M312 714.5h2M392 743.5h3M425 758.5h3M463 758.5h3M402 747.5h2M363 732.5h2M504 732.5h2M567 732.5h2M406 749.5h2M376 737.5h3M255 683.5h2M864 683.5h4M294 705.5h2M727 705.5h2M316 716.5h2M662 770.5h2M310 713.5h2M860 684.5h4M397 745.5h3M486 745.5h2M410 751.5h2M477 751.5h2M280 698.5h2M742 698.5h2M292 704.5h2M729 704.5h2M323 719.5h4M389 742.5h3M490 742.5h2M276 696.5h2M747 696.5h3M795 696.5h4M819 696.5h3M428 759.5h2M458 759.5h5M381 739.5h3M494 739.5h2M284 700.5h2M737 700.5h2M960 669.5h4M288 702.5h2M733 702.5h2M250 680.5h2M879 680.5h5M298 707.5h2M723 707.5h2M365 733.5h3M419 755.5h2M470 755.5h2M423 757.5h2M466 757.5h2M308 712.5h2M430 760.5h2M452 760.5h6M300 708.5h2M721 708.5h2M360 731.5h3M352 728.5h3M371 735.5h2M571 735.5h2M296 706.5h2M725 706.5h2M239 673.5h2M943 673.5h5M835 691.5h3M314 715.5h2M379 738.5h2M575 738.5h2M670 764.5h2M306 711.5h2M666 767.5h2M318 717.5h2M404 748.5h2M482 748.5h2M408 750.5h2M479 750.5h2M400 746.5h2M302 709.5h2M705.5 725v1M570.5 734v1M697.5 734v2M589.5 752v1M682.5 752v1M507.5 730v1M565.5 730v1M701.5 730v1M599.5 762v1M673.5 762v1M488.5 744v1M582.5 744v1M689.5 744v1M244.5 676v1M493.5 740v1M578.5 740v1M692.5 740v2M703.5 727v1M709.5 721v1M249.5 679v1M598.5 761v1M674.5 761v1M708.5 722v1M265.5 689v1M228.5 666v1M474.5 753v1M590.5 753v1M681.5 753v1M252.5 681v1M241.5 674v1M707.5 723v1M492.5 741v1M579.5 741v1M260.5 686v1M657.5 774v1M706.5 724v1M710.5 720v1M591.5 754v1M680.5 754v1M573.5 736v1M696.5 736v1M719.5 710v1M236.5 671v1M593.5 756v1M678.5 756v1M273.5 694v1M702.5 728v2M704.5 726v1M712.5 718v1M600.5 763v1M672.5 763v1M715.5 714v1M489.5 743v1M581.5 743v1M690.5 743v1M595.5 758v1M677.5 757v2M484.5 747v1M585.5 747v2M686.5 747v1M699.5 732v1M481.5 749v1M586.5 749v1M685.5 748v2M497.5 737v1M574.5 737v1M695.5 737v1M713.5 716v2M607.5 770v1M716.5 713v1M257.5 684v1M583.5 745v1M688.5 745v1M588.5 751v1M683.5 751v1M711.5 719v1M580.5 742v1M691.5 742v1M609.5 772v1M660.5 772v1M596.5 759v1M676.5 759v1M577.5 739v1M693.5 739v1M233.5 669v1M503.5 733v1M569.5 733v1M698.5 733v1M592.5 755v1M679.5 755v1M594.5 757v1M717.5 712v1M597.5 760v1M675.5 760v1M606.5 769v1M664.5 769v1M506.5 731v1M566.5 731v1M700.5 731v1M603.5 766v1M668.5 766v1M510.5 728v1M562.5 728v1M500.5 735v1M268.5 691v1M714.5 715v1M496.5 738v1M694.5 738v1M601.5 764v1M718.5 711v1M602.5 765v1M669.5 765v1M604.5 767v1M608.5 771v1M661.5 771v1M587.5 750v1M684.5 750v1M485.5 746v1M584.5 746v1M687.5 746v1M720.5 709v1M605.5 768v1M665.5 768v1" stroke="#be00be" stroke-width="1" fill="none"/>
<rect x="8.5" y="473.5" width="1189" height="22" fill="#eeeeee" stroke="#a8cfe8" stroke-width="1"/>
<rect x="8.5" y="630.5" width="1189" height="22" fill="#eeeeee" stroke="#a8cfe8" stroke-width="1"/>
<path d="M1199.5 32V789M8 788.5H1200" stroke="#000" stroke-width="1"/>
<rect x="0.5" y="0.5" width="1261" height="23" fill="#ffffff" stroke="#a0a0e8" stroke-width="1"/>
<rect x="0" y="811" width="1262" height="26" fill="#eeeeee" stroke="none"/>
<rect x="1" y="812" width="35" height="24" fill="#14248c" stroke="none"/>
</g>
<g font-family='"Liberation Sans","WenQuanYi Zen Hei","Noto Sans CJK SC",sans-serif' text-rendering="geometricPrecision" style="white-space:pre">
<text x="2" y="15.5" font-size="12" fill="#003377" textLength="84" lengthAdjust="spacing" font-family='"Liberation Sans","Noto Sans CJK SC","WenQuanYi Zen Hei",sans-serif'>简单移动平均线</text>
<text x="86" y="16.2" font-size="12" fill="#003377" textLength="129.5" lengthAdjust="spacing">(SMA) (4, 9, 25, 50, 100)</text>
<text x="219" y="16.2" font-size="12" fill="#9999ee" textLength="68.3" lengthAdjust="spacing">(4): 33,852.5</text>
<text x="291.3" y="16.2" font-size="12" fill="#ff99ee" textLength="58.2" lengthAdjust="spacing">(9): 31,408</text>
<text x="353.1" y="16.2" font-size="12" fill="#00bb55" textLength="82.3" lengthAdjust="spacing">(25): 25,347.44</text>
<text x="439" y="16.2" font-size="12" fill="#ff9988" textLength="82.3" lengthAdjust="spacing">(50): 21,201.84</text>
<text x="525.2" y="16.2" font-size="12" fill="#00dddd" textLength="89.4" lengthAdjust="spacing">(100): 17,588.05</text>
<text x="260.5" y="42.2" font-size="10" fill="#000" textLength="20.6" lengthAdjust="spacing" font-family='"Liberation Sans","Noto Sans CJK SC","WenQuanYi Zen Hei",sans-serif'>一月</text>
<text x="283.4" y="42.2" font-size="10" fill="#000" textLength="12" lengthAdjust="spacing">21</text>
<text x="452.5" y="42.2" font-size="10" fill="#000" textLength="20.6" lengthAdjust="spacing" font-family='"Liberation Sans","Noto Sans CJK SC","WenQuanYi Zen Hei",sans-serif'>一月</text>
<text x="475.4" y="42.2" font-size="10" fill="#000" textLength="12" lengthAdjust="spacing">22</text>
<text x="644.5" y="42.2" font-size="10" fill="#000" textLength="20.6" lengthAdjust="spacing" font-family='"Liberation Sans","Noto Sans CJK SC","WenQuanYi Zen Hei",sans-serif'>一月</text>
<text x="667.4" y="42.2" font-size="10" fill="#000" textLength="12" lengthAdjust="spacing">23</text>
<text x="836.5" y="42.2" font-size="10" fill="#000" textLength="20.6" lengthAdjust="spacing" font-family='"Liberation Sans","Noto Sans CJK SC","WenQuanYi Zen Hei",sans-serif'>一月</text>
<text x="859.4" y="42.2" font-size="10" fill="#000" textLength="12" lengthAdjust="spacing">24</text>
<text x="1028.5" y="42.2" font-size="10" fill="#000" textLength="20.6" lengthAdjust="spacing" font-family='"Liberation Sans","Noto Sans CJK SC","WenQuanYi Zen Hei",sans-serif'>一月</text>
<text x="1051.4" y="42.2" font-size="10" fill="#000" textLength="12" lengthAdjust="spacing">25</text>
<text x="1203.8" y="49.2" font-size="10" fill="#000" textLength="60" lengthAdjust="spacing">42,000.0000</text>
<text x="1203.8" y="92.2" font-size="10" fill="#000" textLength="60" lengthAdjust="spacing">39,000.0000</text>
<text x="1203.8" y="135.2" font-size="10" fill="#000" textLength="60" lengthAdjust="spacing">36,000.0000</text>
<text x="1203.8" y="178.2" font-size="10" fill="#000" textLength="60" lengthAdjust="spacing">33,000.0000</text>
<text x="1203.8" y="221.2" font-size="10" fill="#000" textLength="60" lengthAdjust="spacing">30,000.0000</text>
<text x="1203.8" y="264.2" font-size="10" fill="#000" textLength="60" lengthAdjust="spacing">27,000.0000</text>
<text x="1203.8" y="307.2" font-size="10" fill="#000" textLength="60" lengthAdjust="spacing">24,000.0000</text>
<text x="1203.8" y="350.2" font-size="10" fill="#000" textLength="60" lengthAdjust="spacing">21,000.0000</text>
<text x="1203.8" y="393.2" font-size="10" fill="#000" textLength="60" lengthAdjust="spacing">18,000.0000</text>
<text x="1203.8" y="436.2" font-size="10" fill="#000" textLength="60" lengthAdjust="spacing">15,000.0000</text>
<text x="1203.8" y="506.2" font-size="10" fill="#000" textLength="18" lengthAdjust="spacing">100</text>
<text x="1203.8" y="553.2" font-size="10" fill="#000" textLength="12" lengthAdjust="spacing">75</text>
<text x="1203.8" y="599.2" font-size="10" fill="#000" textLength="12" lengthAdjust="spacing">50</text>
<text x="1203.8" y="669.2" font-size="10" fill="#000" textLength="12" lengthAdjust="spacing">90</text>
<text x="1203.8" y="719.2" font-size="10" fill="#000" textLength="12" lengthAdjust="spacing">60</text>
<text x="1203.8" y="769.2" font-size="10" fill="#000" textLength="12" lengthAdjust="spacing">30</text>
<text x="12" y="491" font-size="10" fill="#003377" textLength="58.4" lengthAdjust="spacing" font-family='"Liberation Sans","Noto Sans CJK SC","WenQuanYi Zen Hei",sans-serif' font-weight="bold">相对强弱指数</text>
<text x="69.8" y="491" font-size="10" fill="#003377" textLength="51.6" lengthAdjust="spacing" stroke="#003377" stroke-width="0.15">(RSI-SMA)</text>
<text x="123" y="491" font-size="10" fill="#003377" textLength="49.9" lengthAdjust="spacing" stroke="#003377" stroke-width="0.15">(14, 25, 9)</text>
<text x="174.3" y="491" font-size="10" fill="#3c80ff" textLength="38.9" lengthAdjust="spacing" stroke="#3c80ff" stroke-width="0.15">88.4973</text>
<text x="213.4" y="491" font-size="10" fill="#003377" stroke="#003377" stroke-width="0.15">,</text>
<text x="219.1" y="491" font-size="10" fill="#cc00cc" textLength="38.9" lengthAdjust="spacing" stroke="#cc00cc" stroke-width="0.15">89.9327</text>
<text x="258.2" y="491" font-size="10" fill="#003377" stroke="#003377" stroke-width="0.15">,</text>
<text x="264.3" y="491" font-size="10" fill="#00cc55" textLength="38.9" lengthAdjust="spacing" stroke="#00cc55" stroke-width="0.15">96.6171</text>
<text x="12.2" y="647.5" font-size="10" fill="#003377" textLength="38.4" lengthAdjust="spacing" font-family='"Liberation Sans","Noto Sans CJK SC","WenQuanYi Zen Hei",sans-serif' font-weight="bold">随机指数</text>
<text x="50" y="647.5" font-size="10" fill="#003377" textLength="29.6" lengthAdjust="spacing" stroke="#003377" stroke-width="0.15">(STC)</text>
<text x="81.3" y="647.5" font-size="10" fill="#003377" textLength="43.1" lengthAdjust="spacing" stroke="#003377" stroke-width="0.15">(14, 5, 3)</text>
<text x="126.5" y="647.5" font-size="10" fill="#3c80ff" textLength="38.7" lengthAdjust="spacing" stroke="#3c80ff" stroke-width="0.15">87.7965</text>
<text x="165.4" y="647.5" font-size="10" fill="#003377" stroke="#003377" stroke-width="0.15">,</text>
<text x="171.3" y="647.5" font-size="10" fill="#cc00cc" textLength="38.9" lengthAdjust="spacing" stroke="#cc00cc" stroke-width="0.15">87.3945</text>
<text x="3.2" y="831" font-size="12" fill="#fff" textLength="30.2" lengthAdjust="spacing" font-weight="bold">10/01</text>
<text x="42.2" y="831" font-size="12" fill="#004030" font-family='"Liberation Sans","Noto Sans CJK SC","WenQuanYi Zen Hei",sans-serif'>开</text>
<text x="57.7" y="831" font-size="12" fill="#0000c8" textLength="37" lengthAdjust="spacing">35,868</text>
<text x="98.3" y="831" font-size="12" fill="#004030" font-family='"Liberation Sans","Noto Sans CJK SC","WenQuanYi Zen Hei",sans-serif'>高</text>
<text x="113.4" y="831" font-size="12" fill="#0000c8" textLength="37" lengthAdjust="spacing">40,758</text>
<text x="154.2" y="831" font-size="12" fill="#004030" font-family='"Liberation Sans","Noto Sans CJK SC","WenQuanYi Zen Hei",sans-serif'>低</text>
<text x="169.3" y="831" font-size="12" fill="#0000c8" textLength="37" lengthAdjust="spacing">35,517</text>
<text x="209.7" y="831" font-size="12" fill="#004030" font-family='"Liberation Sans","Noto Sans CJK SC","WenQuanYi Zen Hei",sans-serif'>收</text>
<text x="225.3" y="831" font-size="12" fill="#0000c8" textLength="37" lengthAdjust="spacing">37,310</text>
</g>
</svg>
</body></html>
